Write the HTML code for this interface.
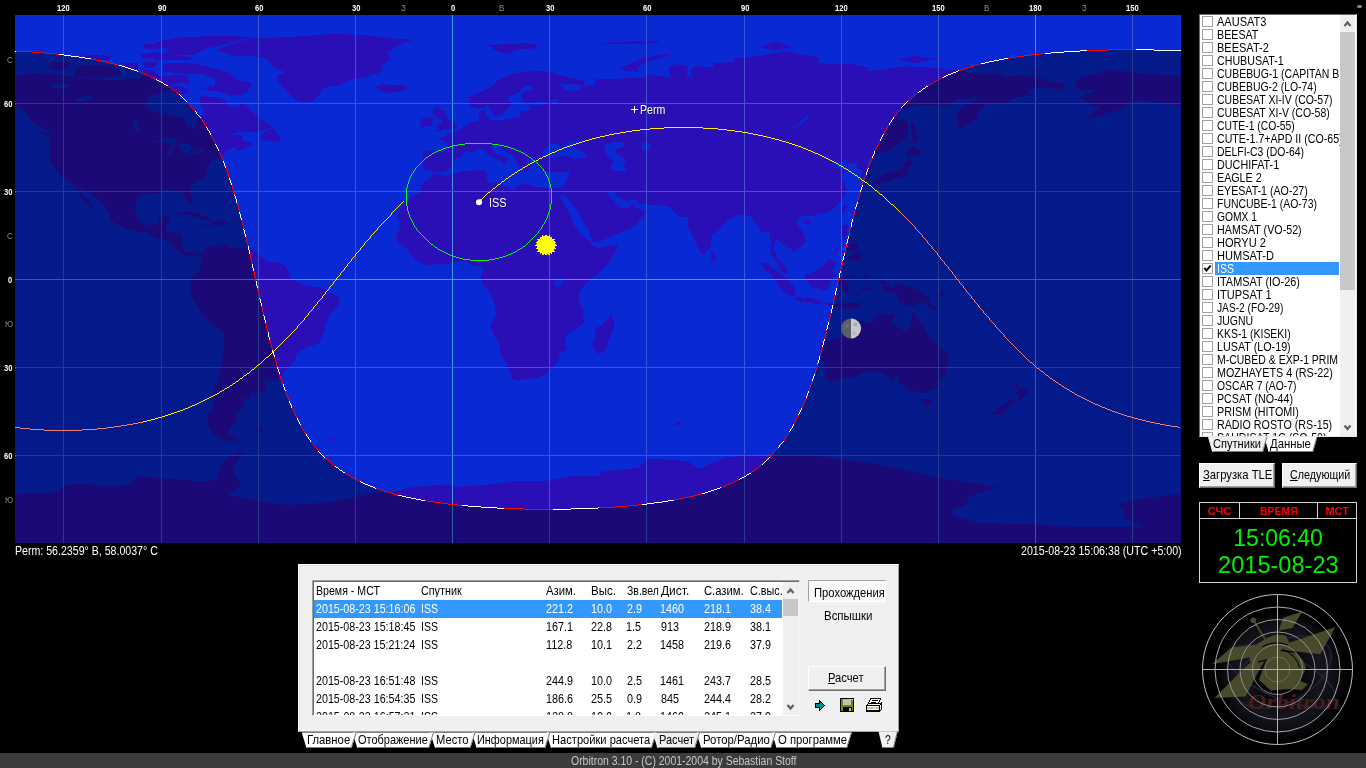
<!DOCTYPE html>
<html lang="ru"><head><meta charset="utf-8"><title>Orbitron</title>
<style>
html,body{margin:0;padding:0;background:#000;}
body{width:1366px;height:768px;overflow:hidden;position:relative;font-family:"Liberation Sans",sans-serif;font-size:13px;line-height:13px;color:#000;}
div,span,i{box-sizing:border-box}
.abs{position:absolute}
.t{position:absolute;white-space:nowrap;font-size:13px;line-height:13px;display:block;backface-visibility:hidden;transform-origin:0 0}
.cl{position:absolute;height:13px;overflow:hidden;display:block}
u{text-decoration:underline;text-decoration-thickness:1px;text-underline-offset:1px}
.selbg{position:absolute;background:#3399ff}
.foc{outline:1px dotted #b87838;outline-offset:-1px}
#list{position:absolute;left:1199px;top:14px;width:158px;height:423px;background:#fff;border:1px solid;border-color:#696969 #e3e3e3 #e3e3e3 #696969;overflow:hidden}
#list .rows{position:absolute;left:0;top:0;width:140px;height:421px;overflow:hidden}
.cb{position:absolute;left:2px;width:11px;height:11px;border:1px solid #a2a2a2;background:#fff;display:block}
.sb{position:absolute;background:#f0f0f0}
.thumb{position:absolute;background:#c8c8c8}
.btn{position:absolute;background:#f0f0f0;border:1px solid;border-color:#fff #6e6e6e #6e6e6e #fff;box-shadow:inset -1px -1px 0 #a0a0a0}
#panel{position:absolute;left:298px;top:564px;width:601px;height:168px;background:#f0f0f0;border:1px solid;border-color:#fff #a0a0a0 #a0a0a0 #fff;box-shadow:inset 1px 1px 0 #e3e3e3}
#lv{position:absolute;left:312px;top:580px;width:488px;height:136px;background:#fff;border:1px solid;border-color:#a0a0a0 #f4f4f4 #fff #a0a0a0}
#lv .in{position:absolute;left:0;top:0;width:486px;height:134px;border-left:1px solid #696969;border-top:1px solid #696969;overflow:hidden}
#lv .rows{position:absolute;left:0;top:0;width:469px;height:133px;overflow:hidden}
#status{position:absolute;left:0;top:753px;width:1366px;height:15px;background:#3c3c3c}
#clock{position:absolute;left:1199px;top:502px;width:158px;height:81px;border:1px solid #d4d4d4;background:#000}
#clock .h{position:absolute;top:0;height:16px;border-bottom:1px solid #d4d4d4}
</style></head><body>
<svg id="map" width="1366" height="562" viewBox="0 0 1366 562" style="position:absolute;left:0;top:0" shape-rendering="crispEdges">
<defs><clipPath id="mc"><rect x="15" y="15" width="1166" height="528"/></clipPath></defs>
<g clip-path="url(#mc)">
<rect x="15" y="15" width="1166" height="528" fill="#0829d3"/>
<path d="M-92.1,86.6L-87.3,78.7L-75.9,75.1L-54.9,69.9L-33.8,72.2L-4.7,74.5L14.8,75.7L37.4,72.8L56.9,74.3L79.5,77.5L102.2,79.5L124.9,79.5L141.1,78.7L144.3,69.3L154.0,70.7L160.5,76.6L176.7,75.1L186.4,74.8L189.6,82.5L173.5,83.9L170.2,89.8L150.8,95.7L145.9,105.9L152.4,111.8L167.0,113.3L176.7,116.8L186.4,117.7L186.4,125.0L192.9,128.8L196.1,126.5L196.1,119.1L202.6,114.7L204.2,108.9L199.4,103.0L201.0,96.0L215.6,97.1L225.3,100.1L226.9,105.9L238.2,107.4L241.5,102.1L251.2,110.3L257.7,117.7L270.6,125.0L270.6,127.9L257.7,131.7L238.2,131.7L230.1,135.3L243.1,135.3L241.5,139.7L254.4,144.1L244.7,148.5L238.2,151.4L235.0,147.0L225.3,151.4L223.7,155.8L212.3,160.2L207.5,167.5L205.8,176.3L199.4,179.3L189.6,186.6L192.9,199.8L191.3,205.1L186.4,201.3L183.8,193.9L179.9,191.0L167.0,190.1L160.5,193.3L147.5,192.5L137.8,196.9L136.2,205.7L135.2,214.5L141.1,223.3L147.5,225.3L157.3,223.9L158.9,217.4L170.2,215.9L167.0,224.7L165.4,232.1L179.9,232.7L182.2,235.6L181.6,246.7L186.4,252.6L194.5,251.1L201.0,253.5L201.0,257.6L196.1,253.5L192.9,257.6L183.2,254.7L175.1,249.7L168.6,240.9L155.6,237.9L147.5,232.1L137.8,232.7L124.9,228.3L110.3,220.3L110.3,213.0L102.2,204.2L89.2,192.5L80.2,186.6L81.1,191.0L89.2,199.8L94.1,207.7L97.3,211.5L89.2,207.1L81.1,197.5L76.9,191.0L72.4,183.7L61.7,177.8L56.9,170.5L50.4,160.8L49.4,152.9L50.4,142.6L48.1,137.0L53.6,135.3L47.1,130.9L39.0,126.5L29.3,119.1L24.5,111.8L14.8,105.9L-1.4,103.0L-17.6,101.5L-30.6,100.1L-40.3,105.9L-46.8,110.3L-59.7,113.3L-72.7,117.7L-80.8,119.1L-66.2,107.4L-72.7,105.9L-82.4,100.1L-85.7,97.1L-80.8,94.2L-69.5,89.8L-85.7,89.8ZM1073.9,86.6L1078.7,78.7L1090.1,75.1L1111.1,69.9L1132.2,72.2L1161.3,74.5L1180.8,75.7L1203.4,72.8L1222.9,74.3L1245.5,77.5L1268.2,79.5L1290.9,79.5L1307.1,78.7L1310.3,69.3L1320.0,70.7L1326.5,76.6L1342.7,75.1L1352.4,74.8L1355.7,82.5L1339.5,83.9L1336.2,89.8L1316.8,95.7L1311.9,105.9L1318.4,111.8L1333.0,113.3L1342.7,116.8L1352.4,117.7L1352.4,125.0L1358.9,128.8L1362.1,126.5L1362.1,119.1L1368.6,114.7L1370.2,108.9L1365.4,103.0L1367.0,96.0L1381.6,97.1L1391.3,100.1L1392.9,105.9L1404.2,107.4L1407.5,102.1L1417.2,110.3L1423.7,117.7L1436.6,125.0L1436.6,127.9L1423.7,131.7L1404.2,131.7L1396.1,135.3L1409.1,135.3L1407.5,139.7L1420.4,144.1L1410.7,148.5L1404.2,151.4L1401.0,147.0L1391.3,151.4L1389.7,155.8L1378.3,160.2L1373.5,167.5L1371.8,176.3L1365.4,179.3L1355.7,186.6L1358.9,199.8L1357.3,205.1L1352.4,201.3L1349.8,193.9L1345.9,191.0L1333.0,190.1L1326.5,193.3L1313.5,192.5L1303.8,196.9L1302.2,205.7L1301.2,214.5L1307.1,223.3L1313.5,225.3L1323.3,223.9L1324.9,217.4L1336.2,215.9L1333.0,224.7L1331.4,232.1L1345.9,232.7L1348.2,235.6L1347.6,246.7L1352.4,252.6L1360.5,251.1L1367.0,253.5L1367.0,257.6L1362.1,253.5L1358.9,257.6L1349.2,254.7L1341.1,249.7L1334.6,240.9L1321.6,237.9L1313.5,232.1L1303.8,232.7L1290.9,228.3L1276.3,220.3L1276.3,213.0L1268.2,204.2L1255.2,192.5L1246.2,186.6L1247.1,191.0L1255.2,199.8L1260.1,207.7L1263.3,211.5L1255.2,207.1L1247.1,197.5L1242.9,191.0L1238.4,183.7L1227.7,177.8L1222.9,170.5L1216.4,160.8L1215.4,152.9L1216.4,142.6L1214.1,137.0L1219.6,135.3L1213.1,130.9L1205.0,126.5L1195.3,119.1L1190.5,111.8L1180.8,105.9L1164.6,103.0L1148.4,101.5L1135.4,100.1L1125.7,105.9L1119.2,110.3L1106.3,113.3L1093.3,117.7L1085.2,119.1L1099.8,107.4L1093.3,105.9L1083.6,100.1L1080.3,97.1L1085.2,94.2L1096.5,89.8L1080.3,89.8ZM201.0,254.1L207.5,247.3L218.8,243.8L220.4,247.3L225.3,243.2L231.8,248.2L244.7,248.2L251.2,247.6L257.7,254.1L267.4,261.4L277.1,262.0L285.2,265.8L290.1,273.7L290.1,279.0L296.5,281.9L307.9,286.3L322.4,287.2L332.2,293.7L338.6,296.6L338.6,305.4L330.5,314.2L325.7,323.0L324.1,331.8L319.2,343.5L307.9,347.1L296.5,353.8L294.3,362.6L286.8,369.9L278.7,378.7L269.0,381.1L262.5,378.7L267.4,386.1L264.1,391.9L251.2,393.4L249.6,399.3L241.5,399.3L244.7,404.5L239.9,411.0L233.4,415.4L238.2,419.8L230.1,427.1L228.5,432.4L230.1,434.5L239.9,439.7L231.8,441.8L222.0,438.9L212.3,433.0L207.5,425.7L207.5,416.9L212.3,409.5L213.0,399.3L213.9,389.0L218.8,378.7L220.4,367.0L223.7,352.3L224.3,337.7L223.7,332.7L215.6,327.4L204.9,320.1L199.4,309.8L192.9,299.5L188.7,293.7L191.9,288.7L189.6,283.4L192.9,277.5L196.1,273.7L200.0,268.7L201.0,259.9ZM215.6,49.6L231.8,44.3L251.2,38.5L290.1,37.0L328.9,34.1L361.3,34.7L393.7,38.5L413.1,39.9L396.9,45.8L387.2,53.1L390.5,59.0L380.7,66.3L380.7,72.2L367.8,76.6L351.6,79.5L338.6,85.4L325.7,86.9L319.2,94.2L312.7,102.4L304.6,102.4L294.9,99.5L286.8,91.3L278.7,82.5L277.1,75.1L285.2,72.2L273.9,67.8L267.4,59.0L254.4,56.1L235.0,56.1L222.0,52.5ZM432.6,174.0L445.5,175.7L461.7,171.1L484.4,169.9L487.6,176.3L485.4,179.3L490.9,182.8L502.2,184.5L513.5,190.1L516.8,185.1L526.5,183.7L533.0,186.0L545.9,188.1L555.6,187.5L557.3,191.0L560.5,196.9L567.0,208.6L571.8,217.4L573.5,224.7L579.9,233.5L591.3,242.3L592.2,245.3L597.8,248.2L607.5,246.1L617.8,244.4L616.5,249.7L610.7,259.9L605.8,267.3L594.5,276.1L588.0,281.9L581.6,287.8L578.3,295.1L579.9,302.5L583.2,309.8L583.8,323.0L575.1,329.7L567.0,334.7L565.4,340.6L567.0,349.4L558.9,354.7L558.2,362.6L552.4,367.0L544.3,375.2L536.2,378.1L523.3,379.3L516.8,381.1L511.9,378.7L510.3,372.9L505.4,362.6L500.6,355.3L499.0,343.5L492.5,331.8L490.2,325.3L495.7,314.2L495.1,305.4L491.8,296.6L490.2,292.2L482.8,284.9L481.1,277.5L483.4,268.7L480.5,265.8L474.7,266.1L471.4,266.4L466.6,260.5L458.5,260.5L448.8,263.5L445.5,264.9L439.0,263.7L427.7,266.1L422.9,264.3L414.8,259.1L409.2,254.1L408.3,250.3L403.4,246.7L397.9,242.9L395.3,235.9L398.6,232.1L400.2,223.3L396.9,217.4L400.2,210.1L405.0,202.7L409.9,197.7L419.6,192.5L420.6,186.6L424.5,181.3L430.9,177.8ZM422.9,165.5L422.9,152.9L426.1,150.8L445.5,151.7L447.8,144.1L443.9,140.3L436.8,137.3L447.1,136.1L446.2,133.2L452.6,133.8L457.2,130.0L465.0,126.5L468.2,122.7L479.5,120.6L478.9,111.8L486.0,109.7L486.0,116.2L490.9,120.0L497.3,120.6L511.9,118.5L520.0,116.2L520.0,111.8L529.7,110.3L530.7,105.1L542.7,104.5L549.2,103.0L542.7,101.5L526.5,103.0L521.6,100.1L521.0,94.2L533.0,88.3L529.7,86.0L523.3,86.9L520.0,91.3L508.7,97.1L508.0,101.5L512.9,103.0L505.4,110.3L503.8,114.1L498.3,116.2L494.1,116.5L492.5,113.3L487.6,105.9L477.9,108.9L469.8,105.9L468.2,97.1L479.5,92.7L490.9,86.9L499.0,79.5L513.5,73.7L534.6,70.7L542.7,70.7L552.4,72.8L558.9,75.1L584.8,81.0L584.8,84.8L575.1,84.8L558.9,83.3L564.7,89.8L573.5,91.3L581.6,88.9L580.9,86.0L594.5,84.8L594.5,78.7L601.0,78.9L610.7,79.5L626.9,78.1L643.1,78.1L648.0,74.3L660.9,75.7L673.9,78.7L669.0,73.7L669.0,66.3L678.7,64.0L687.8,66.3L686.8,75.1L691.7,78.9L690.1,69.3L694.9,66.3L712.7,66.9L714.4,63.1L733.8,61.9L733.8,58.4L759.7,55.8L788.8,51.1L798.6,53.7L818.0,56.7L819.6,62.8L808.3,62.5L834.2,64.0L852.0,64.0L869.8,67.8L866.6,71.3L882.8,69.3L905.4,66.3L937.8,67.8L960.5,70.7L971.8,74.5L1002.6,73.7L1005.9,76.6L1025.3,74.5L1035.0,76.6L1051.2,81.0L1067.4,84.8L1059.3,89.8L1041.5,86.9L1035.0,88.3L1026.9,89.2L1031.8,95.7L1015.6,97.7L1004.2,103.0L986.4,103.0L981.6,108.9L976.7,114.7L976.7,119.1L970.2,123.5L960.5,129.4L957.3,123.5L956.3,113.3L960.5,108.9L970.2,101.5L983.2,95.7L970.2,98.6L957.3,98.6L950.8,104.5L937.8,104.5L915.2,105.1L899.0,111.8L890.9,118.5L907.1,120.6L908.7,126.5L907.1,136.7L900.6,142.6L890.9,149.9L879.5,152.9L874.7,154.3L866.6,161.7L870.8,170.5L869.8,175.7L861.7,177.8L861.7,170.5L856.9,167.5L856.9,162.5L845.5,164.6L847.1,159.3L834.2,164.6L837.4,169.0L848.8,169.6L840.7,174.9L845.5,185.1L847.1,191.0L843.9,196.9L837.4,205.1L829.3,211.5L819.6,213.9L809.9,216.5L801.8,215.9L795.3,221.8L803.4,232.1L806.0,242.3L798.6,248.2L792.1,253.5L792.1,249.1L785.6,246.7L779.1,240.9L775.9,239.4L773.6,248.2L777.5,258.5L786.6,267.3L787.2,274.6L780.7,271.1L776.9,261.4L770.4,254.1L771.0,242.3L768.4,231.2L761.3,232.1L757.4,224.7L750.0,215.9L741.9,214.5L733.8,216.8L727.3,221.2L717.6,230.6L711.8,235.0L711.1,243.8L709.5,249.1L703.0,255.5L698.2,248.2L693.3,237.9L688.4,227.7L687.8,217.4L680.3,217.4L675.5,213.6L670.0,207.1L659.3,204.8L646.3,204.8L637.3,203.3L635.0,199.8L626.9,200.7L617.2,196.9L613.9,191.0L607.5,191.0L609.1,195.4L614.6,201.3L617.2,205.7L618.8,202.7L620.4,208.0L628.5,208.0L634.3,202.1L635.0,207.1L642.4,210.1L645.7,213.6L639.9,219.5L637.6,223.9L630.1,228.5L620.4,232.7L609.1,237.9L597.8,241.5L592.2,241.5L590.3,235.0L588.0,229.1L581.6,220.3L577.7,211.5L571.2,202.7L565.4,196.9L564.7,192.5L562.8,197.5L557.9,191.6L557.3,187.5L563.1,187.2L565.4,182.2L568.6,174.9L568.6,171.1L558.9,172.8L550.8,171.9L541.1,170.5L537.2,165.2L537.8,161.7L529.7,159.3L526.5,160.8L525.5,163.7L529.7,167.5L526.5,171.9L523.3,171.3L521.0,168.1L516.8,162.5L515.2,157.3L511.9,154.3L502.2,149.9L497.3,146.4L495.7,144.9L491.8,146.1L492.5,149.9L497.3,154.3L503.8,156.4L511.9,161.1L507.1,160.2L505.4,164.6L502.9,167.5L503.8,163.1L500.6,161.1L492.5,157.3L486.0,153.5L484.4,149.9L480.5,148.8L476.3,150.5L471.4,152.6L465.0,151.4L461.7,154.3L462.4,156.4L453.6,160.2L451.0,163.7L450.4,167.5L445.5,171.1L434.8,172.8L431.6,171.1L427.7,169.9L422.9,170.5ZM434.2,132.3L442.3,130.3L456.2,128.8L457.5,124.4L452.0,122.1L447.1,117.7L445.5,114.7L445.5,109.7L439.0,109.7L442.3,107.1L435.8,107.1L432.6,110.3L434.2,116.2L436.5,118.3L442.3,120.6L442.3,122.7L437.4,122.7L438.4,125.6L435.2,127.1L440.7,128.2L437.4,129.4ZM419.6,127.1L431.6,125.9L432.6,122.1L434.2,119.1L430.9,117.1L425.4,117.1L419.6,120.0L421.2,122.9ZM374.3,86.9L380.7,84.2L393.7,84.8L403.4,84.8L407.6,88.3L403.4,90.4L390.5,93.0L379.1,91.6L380.7,88.9ZM487.6,45.2L503.8,44.3L523.3,43.2L539.5,44.0L533.0,48.7L520.0,49.3L507.1,54.3L497.3,51.7ZM618.8,68.4L630.1,64.0L639.9,59.0L662.5,54.6L673.9,53.4L665.8,56.9L646.3,61.9L636.6,67.8L638.2,71.6L626.9,71.3ZM759.7,47.3L775.9,41.4L792.1,47.3L775.9,50.2ZM895.7,59.0L915.2,56.1L937.8,58.4L915.2,63.4ZM1030.1,69.9L1043.1,69.9L1041.5,71.3L1031.8,71.3ZM876.3,179.3L882.8,174.9L894.1,171.3L900.6,169.0L905.4,161.7L909.7,157.9L911.9,163.1L908.7,169.0L907.1,175.5L901.2,177.2L895.1,177.8L890.9,180.7L882.8,182.2L877.9,187.2L874.0,187.5L872.1,181.3ZM905.4,157.3L906.4,152.3L911.0,145.8L916.8,149.3L922.6,151.4L916.8,155.8L908.7,154.9ZM911.9,119.7L916.1,126.5L916.1,133.8L920.0,135.3L915.2,143.5L911.9,142.6L911.9,132.3L911.0,126.5ZM843.9,205.1L847.1,205.7L843.3,214.5L840.7,211.5ZM805.0,220.3L811.5,220.3L809.9,224.7L804.1,224.1ZM842.3,224.7L847.8,224.7L847.1,232.1L845.5,237.9L853.6,240.9L852.0,242.3L842.9,238.5L840.7,232.1ZM847.1,244.4L858.5,242.9L857.8,249.7L851.4,251.7L847.1,249.7ZM847.1,258.5L852.0,254.1L858.5,250.5L861.7,255.5L860.1,260.5L857.8,262.3L853.6,259.9ZM831.9,254.1L839.0,246.7L839.7,248.2L833.2,254.7ZM805.0,274.6L811.5,273.7L818.0,269.3L824.5,264.3L830.0,258.5L837.4,263.7L834.2,266.4L833.2,271.7L837.4,276.1L832.6,277.5L829.3,283.4L827.7,290.1L822.9,290.7L818.0,288.4L813.1,288.7L808.3,283.4L805.0,279.0ZM760.7,262.6L767.8,263.7L775.9,270.2L787.2,279.0L795.3,287.8L794.7,296.0L790.5,296.0L782.4,290.7L777.5,283.4L771.0,274.6L762.9,267.3ZM792.7,298.9L797.6,296.6L803.7,298.7L811.5,298.1L818.0,299.5L822.9,301.6L822.2,304.5L811.5,303.3L801.8,301.9L796.6,300.7ZM824.5,303.1L837.4,303.3L850.4,303.3L863.3,303.3L860.1,306.3L853.6,308.9L840.7,307.7L827.7,305.4ZM839.0,295.1L841.6,287.8L837.4,281.9L840.7,276.7L850.4,276.1L856.9,274.6L855.2,277.8L843.9,277.8L845.5,281.9L851.4,281.6L847.1,284.9L849.7,292.2L846.2,292.8L843.3,287.8L842.0,295.1ZM865.0,273.1L868.8,276.1L866.6,281.3L864.3,277.5ZM860.1,288.4L874.7,287.8L873.1,290.1L863.3,290.1ZM876.3,281.3L886.0,281.3L890.9,288.7L899.0,284.0L908.7,286.6L920.0,290.1L924.9,295.1L930.7,298.1L928.1,301.0L933.0,305.4L940.4,309.8L929.7,308.3L924.9,303.1L918.4,301.6L915.2,306.0L908.7,306.0L902.2,302.5L899.0,303.3L898.0,295.1L890.9,292.2L882.8,290.7L879.5,287.2L885.4,285.7ZM933.0,295.1L944.3,291.3L945.3,295.1L936.2,297.5ZM711.1,250.5L716.9,257.0L714.4,261.4L711.1,260.8L710.5,255.5ZM611.7,314.2L614.9,324.5L612.3,330.3L606.8,346.5L604.2,352.3L597.8,353.8L593.5,347.9L592.9,342.1L596.1,336.2L594.5,328.9L602.6,324.5L607.5,318.6ZM819.6,343.5L821.9,355.3L824.5,367.0L826.1,377.3L824.5,379.6L834.2,381.7L840.7,378.7L853.6,377.3L860.1,373.7L869.8,372.0L877.9,371.4L886.0,375.2L890.9,381.1L897.3,375.8L899.0,383.1L904.5,386.1L908.7,391.1L918.4,391.9L925.8,393.4L931.4,389.9L937.8,388.1L941.1,378.7L946.6,372.9L948.2,364.1L947.5,355.3L941.1,347.9L934.6,340.6L928.1,335.6L924.9,331.8L922.6,323.0L917.4,320.9L914.2,311.3L911.0,317.1L910.3,324.5L907.7,330.3L902.2,329.7L895.7,325.3L890.9,323.0L892.5,318.6L894.8,314.2L882.8,313.3L876.3,315.1L872.1,322.4L866.6,323.0L861.7,320.1L855.2,325.9L848.1,330.3L847.1,333.3L839.0,337.7L829.3,340.0L822.9,342.7ZM920.7,398.7L932.0,398.7L931.4,405.1L926.5,406.6L923.3,403.7ZM1011.4,380.2L1017.2,384.6L1022.0,389.0L1030.1,389.6L1025.3,394.9L1020.4,400.7L1018.2,399.3L1018.8,395.7L1015.6,394.0L1017.8,389.0L1012.3,381.7ZM1011.4,397.8L1016.2,400.7L1012.3,405.1L1005.9,409.5L1004.2,413.9L997.8,415.4L991.3,413.3L997.8,408.1L1005.9,403.1ZM176.7,214.5L186.4,210.9L196.1,213.0L207.5,217.4L211.7,219.7L201.0,220.6L199.4,218.3L186.4,213.9L179.9,215.1ZM210.7,220.9L218.8,220.3L230.1,223.9L222.0,226.2L211.4,225.3ZM198.4,225.0L204.9,225.3L204.2,226.8L198.7,226.8ZM234.3,224.7L239.2,225.0L238.9,226.2L234.3,226.2ZM259.9,139.1L265.8,130.3L272.2,127.9L280.3,136.7L281.3,141.1L272.2,141.7ZM36.5,130.0L47.1,131.7L52.0,136.7L45.5,135.9ZM252.8,83.9L244.7,94.2L231.8,95.7L218.8,91.3L199.4,89.8L213.9,85.4L215.6,78.7L199.4,73.7L176.7,73.7L162.1,70.7L163.7,63.4L189.6,62.8L202.6,65.5L218.8,69.3L231.8,73.7L236.6,79.5L251.2,82.5ZM73.1,73.7L79.5,64.9L102.2,64.9L111.9,66.3L123.3,73.7L111.9,76.6L95.7,77.8L76.3,76.6ZM47.1,67.8L53.6,61.1L71.4,62.5L66.6,69.3L52.0,70.1ZM160.5,54.6L170.2,50.2L154.0,42.9L176.7,37.6L225.3,35.5L251.2,37.6L231.8,42.9L205.8,48.7L192.9,55.2ZM141.1,53.7L157.3,53.1L192.9,57.5L186.4,60.5L157.3,59.9L141.1,57.5ZM76.3,56.1L95.7,54.6L111.9,56.1L108.7,59.6L89.2,60.5L76.3,59.0ZM121.6,63.4L137.8,62.5L137.8,69.3L128.1,68.4ZM142.7,61.9L158.9,61.9L154.0,67.8L144.3,67.8ZM141.1,44.3L167.0,43.5L170.2,47.3L147.5,49.3ZM170.2,86.9L179.9,86.0L191.3,91.9L183.2,94.2L173.5,92.7ZM-1151.2,493.7L-1107.5,492.3L-1100.1,484.9L-1078.1,483.5L-1066.4,486.4L-1037.2,484.9L-1028.2,476.1L-1001.9,478.5L-961.1,481.4L-949.1,479.1L-943.3,461.5L-931.7,454.1L-918.7,449.7L-927.8,457.9L-933.3,470.3L-924.5,484.9L-937.5,495.2L-908.3,501.1L-879.2,504.9L-843.9,503.1L-814.4,498.1L-794.0,493.1L-775.9,492.3L-758.4,487.9L-746.7,486.4L-717.2,484.3L-713.0,487.0L-679.3,484.9L-653.1,481.4L-617.8,480.5L-588.7,475.5L-568.2,476.1L-562.1,471.1L-527.1,467.9L-518.4,458.5L-506.7,459.1L-477.2,461.5L-467.2,468.8L-453.9,462.9L-439.3,457.1L-401.1,455.0L-375.9,455.6L-346.7,456.2L-323.4,460.0L-293.9,462.9L-258.9,470.3L-229.5,477.6L-200.3,482.0L-167.9,487.3L-197.4,496.7L-200.3,505.5L-213.6,509.0L-212.9,515.7L-188.7,522.5L-130.0,524.5L-83.1,527.5L-24.8,526.6L-42.3,517.2L-41.9,511.3L-48.1,504.0L-30.6,499.6L14.8,493.7L16.4,545.9L-1152.9,545.9L-1152.9,493.7ZM14.8,493.7L58.5,492.3L65.9,484.9L87.9,483.5L99.6,486.4L128.8,484.9L137.8,476.1L164.1,478.5L204.9,481.4L216.9,479.1L222.7,461.5L234.3,454.1L247.3,449.7L238.2,457.9L232.7,470.3L241.5,484.9L228.5,495.2L257.7,501.1L286.8,504.9L322.1,503.1L351.6,498.1L372.0,493.1L390.1,492.3L407.6,487.9L419.3,486.4L448.8,484.3L453.0,487.0L486.7,484.9L512.9,481.4L548.2,480.5L577.3,475.5L597.8,476.1L603.9,471.1L638.9,467.9L647.6,458.5L659.3,459.1L688.8,461.5L698.8,468.8L712.1,462.9L726.7,457.1L764.9,455.0L790.1,455.6L819.3,456.2L842.6,460.0L872.1,462.9L907.1,470.3L936.5,477.6L965.7,482.0L998.1,487.3L968.6,496.7L965.7,505.5L952.4,509.0L953.1,515.7L977.3,522.5L1036.0,524.5L1082.9,527.5L1141.2,526.6L1123.7,517.2L1124.1,511.3L1117.9,504.0L1135.4,499.6L1180.8,493.7L1182.4,545.9L13.1,545.9L13.1,493.7ZM1180.8,493.7L1224.5,492.3L1231.9,484.9L1253.9,483.5L1265.6,486.4L1294.8,484.9L1303.8,476.1L1330.1,478.5L1370.9,481.4L1382.9,479.1L1388.7,461.5L1400.3,454.1L1413.3,449.7L1404.2,457.9L1398.7,470.3L1407.5,484.9L1394.5,495.2L1423.7,501.1L1452.8,504.9L1488.1,503.1L1517.6,498.1L1538.0,493.1L1556.1,492.3L1573.6,487.9L1585.3,486.4L1614.8,484.3L1619.0,487.0L1652.7,484.9L1678.9,481.4L1714.2,480.5L1743.3,475.5L1763.8,476.1L1769.9,471.1L1804.9,467.9L1813.6,458.5L1825.3,459.1L1854.8,461.5L1864.8,468.8L1878.1,462.9L1892.7,457.1L1930.9,455.0L1956.1,455.6L1985.3,456.2L2008.6,460.0L2038.1,462.9L2073.1,470.3L2102.5,477.6L2131.7,482.0L2164.1,487.3L2134.6,496.7L2131.7,505.5L2118.4,509.0L2119.1,515.7L2143.3,522.5L2202.0,524.5L2248.9,527.5L2307.2,526.6L2289.7,517.2L2290.1,511.3L2283.9,504.0L2301.4,499.6L2346.8,493.7L2348.4,545.9L1179.1,545.9L1179.1,493.7ZM254.4,429.2L264.1,429.5L262.5,432.1L255.1,431.8ZM328.9,437.4L335.4,438.3L334.4,439.7L329.6,438.9ZM674.8,421.9L680.3,422.1L679.7,424.5L675.5,424.5ZM601.0,43.5L613.9,41.7L633.4,41.4L652.8,40.5L662.5,42.0L646.3,43.7L626.9,44.3Z" fill="#2a0eb6"/>
<path d="M542.7,156.4L542.7,151.4L547.5,147.0L550.8,143.2L558.9,144.1L560.5,148.2L567.0,147.0L565.4,143.2L576.7,140.5L579.0,142.6L571.8,146.1L575.1,148.5L586.4,154.3L586.4,157.3L575.1,158.7L565.4,155.8L555.6,157.3L547.5,158.1ZM604.2,145.5L613.9,142.0L623.7,142.6L623.7,147.0L617.2,148.5L615.6,152.9L623.0,157.3L626.3,160.2L623.7,166.1L626.9,170.5L617.2,171.3L610.7,169.0L611.7,163.1L613.9,160.8L607.5,155.8L605.2,151.4ZM641.5,142.6L649.6,142.6L649.6,149.9L641.5,150.5ZM154.0,141.7L167.0,136.7L176.7,139.7L178.3,142.6L170.2,142.6L160.5,142.0ZM167.0,155.8L170.2,145.5L176.7,144.7L171.8,151.4L170.2,156.7ZM178.3,144.1L189.6,144.1L192.9,148.5L186.4,152.9L181.6,149.9ZM182.2,156.7L196.1,153.5L204.2,152.0L204.2,149.9L194.5,150.8L184.8,154.9ZM131.4,122.1L136.2,120.6L139.4,129.4L136.2,130.9ZM50.4,85.4L63.3,82.5L69.8,85.4L63.3,88.3L53.6,88.3ZM73.1,100.1L86.0,95.7L95.7,95.7L89.2,100.1L79.5,101.5ZM788.8,127.9L795.3,125.6L806.7,116.2L808.3,116.8L801.8,124.1L792.1,127.9ZM555.0,280.5L560.5,278.1L563.7,281.9L558.9,287.2L555.0,285.7ZM549.2,101.5L555.6,98.6L558.9,100.1L557.3,103.0L552.4,103.0Z" fill="#0829d3"/>
<rect x="-34" y="15" width="1" height="528" fill="#3e55d3"/>
<rect x="63" y="15" width="1" height="528" fill="#3e55d3"/>
<rect x="161" y="15" width="1" height="528" fill="#3e55d3"/>
<rect x="258" y="15" width="1" height="528" fill="#3e55d3"/>
<rect x="355" y="15" width="1" height="528" fill="#3e55d3"/>
<rect x="452" y="15" width="1" height="528" fill="#4696ea"/>
<rect x="549" y="15" width="1" height="528" fill="#3e55d3"/>
<rect x="646" y="15" width="1" height="528" fill="#3e55d3"/>
<rect x="744" y="15" width="1" height="528" fill="#3e55d3"/>
<rect x="841" y="15" width="1" height="528" fill="#3e55d3"/>
<rect x="938" y="15" width="1" height="528" fill="#3e55d3"/>
<rect x="1035" y="15" width="1" height="528" fill="#4696ea"/>
<rect x="1132" y="15" width="1" height="528" fill="#3e55d3"/>
<rect x="15" y="455" width="1166" height="1" fill="#3e55d3"/>
<rect x="15" y="367" width="1166" height="1" fill="#3e55d3"/>
<rect x="15" y="279" width="1166" height="1" fill="#4696ea"/>
<rect x="15" y="191" width="1166" height="1" fill="#3e55d3"/>
<rect x="15" y="103" width="1166" height="1" fill="#3e55d3"/>
<path d="M-1.4,50.3L1.8,50.4L5.0,50.5L8.3,50.7L11.5,50.8L14.8,51.0L18.0,51.2L21.2,51.3L24.5,51.5L27.7,51.7L30.9,52.0L34.2,52.2L37.4,52.4L40.7,52.7L43.9,53.0L47.1,53.3L50.4,53.6L53.6,53.9L56.9,54.3L60.1,54.6L63.3,55.0L66.6,55.4L69.8,55.8L73.1,56.3L76.3,56.7L79.5,57.2L82.8,57.7L86.0,58.2L89.2,58.8L92.5,59.4L95.7,60.0L99.0,60.6L102.2,61.3L105.4,62.0L108.7,62.7L111.9,63.5L115.2,64.4L118.4,65.2L121.6,66.1L124.9,67.1L128.1,68.1L131.4,69.2L134.6,70.3L137.8,71.5L141.1,72.7L144.3,74.0L147.5,75.4L150.8,76.9L154.0,78.5L157.3,80.2L160.5,82.0L163.7,83.9L167.0,85.9L170.2,88.0L173.5,90.3L176.7,92.8L179.9,95.5L183.2,98.3L186.4,101.4L189.6,104.7L192.9,108.2L196.1,112.1L199.4,116.3L202.6,120.8L205.8,125.7L209.1,131.1L212.3,136.9L215.6,143.3L218.8,150.2L222.0,157.8L225.3,166.1L228.5,175.1L231.8,184.9L235.0,195.4L238.2,206.8L241.5,219.0L244.7,231.9L247.9,245.5L251.2,259.5L254.4,273.7L257.7,288.1L260.9,302.4L264.1,316.3L267.4,329.7L270.6,342.5L273.9,354.5L277.1,365.7L280.3,376.2L283.6,385.8L286.8,394.7L290.1,402.8L293.3,410.2L296.5,417.1L299.8,423.3L303.0,429.0L306.2,434.3L309.5,439.1L312.7,443.6L316.0,447.7L319.2,451.5L322.4,455.0L325.7,458.3L328.9,461.3L332.2,464.1L335.4,466.7L338.6,469.1L341.9,471.4L345.1,473.5L348.4,475.5L351.6,477.4L354.8,479.2L358.1,480.8L361.3,482.4L364.6,483.8L367.8,485.2L371.0,486.5L374.3,487.8L377.5,489.0L380.7,490.1L384.0,491.1L387.2,492.1L390.5,493.1L393.7,494.0L396.9,494.8L400.2,495.6L403.4,496.4L406.7,497.1L409.9,497.8L413.1,498.5L416.4,499.1L419.6,499.8L422.9,500.3L426.1,500.9L429.3,501.4L432.6,501.9L435.8,502.4L439.0,502.8L442.3,503.3L445.5,503.7L448.8,504.1L452.0,504.5L455.2,504.8L458.5,505.1L461.7,505.5L465.0,505.8L468.2,506.1L471.4,506.3L474.7,506.6L477.9,506.8L481.1,507.1L484.4,507.3L487.6,507.5L490.9,507.7L494.1,507.9L497.3,508.0L500.6,508.2L503.8,508.4L507.1,508.5L510.3,508.6L513.5,508.7L516.8,508.8L520.0,508.9L523.3,509.0L526.5,509.1L529.7,509.1L533.0,509.2L536.2,509.2L539.5,509.2L542.7,509.3L545.9,509.3L549.2,509.3L552.4,509.3L555.6,509.2L558.9,509.2L562.1,509.2L565.4,509.1L568.6,509.0L571.8,509.0L575.1,508.9L578.3,508.8L581.6,508.7L584.8,508.6L588.0,508.5L591.3,508.3L594.5,508.2L597.8,508.0L601.0,507.8L604.2,507.7L607.5,507.5L610.7,507.3L613.9,507.0L617.2,506.8L620.4,506.6L623.7,506.3L626.9,506.0L630.1,505.7L633.4,505.4L636.6,505.1L639.9,504.7L643.1,504.4L646.3,504.0L649.6,503.6L652.8,503.2L656.0,502.7L659.3,502.3L662.5,501.8L665.8,501.3L669.0,500.8L672.2,500.2L675.5,499.6L678.7,499.0L682.0,498.4L685.2,497.7L688.4,497.0L691.7,496.3L694.9,495.5L698.2,494.6L701.4,493.8L704.6,492.9L707.9,491.9L711.1,490.9L714.4,489.8L717.6,488.7L720.8,487.5L724.1,486.3L727.3,485.0L730.5,483.6L733.8,482.1L737.0,480.5L740.3,478.8L743.5,477.0L746.7,475.1L750.0,473.1L753.2,471.0L756.5,468.7L759.7,466.2L762.9,463.5L766.2,460.7L769.4,457.6L772.6,454.3L775.9,450.8L779.1,446.9L782.4,442.7L785.6,438.2L788.8,433.3L792.1,427.9L795.3,422.1L798.6,415.7L801.8,408.8L805.0,401.2L808.3,392.9L811.5,383.9L814.8,374.1L818.0,363.6L821.2,352.2L824.5,340.0L827.7,327.1L831.0,313.5L834.2,299.5L837.4,285.3L840.7,270.9L843.9,256.6L847.1,242.7L850.4,229.3L853.6,216.5L856.9,204.5L860.1,193.3L863.3,182.8L866.6,173.2L869.8,164.3L873.1,156.2L876.3,148.8L879.5,141.9L882.8,135.7L886.0,130.0L889.2,124.7L892.5,119.9L895.7,115.4L899.0,111.3L902.2,107.5L905.4,104.0L908.7,100.7L911.9,97.7L915.2,94.9L918.4,92.3L921.6,89.9L924.9,87.6L928.1,85.5L931.4,83.5L934.6,81.6L937.8,79.8L941.1,78.2L944.3,76.6L947.5,75.2L950.8,73.8L954.0,72.5L957.3,71.2L960.5,70.0L963.7,68.9L967.0,67.9L970.2,66.9L973.5,65.9L976.7,65.0L979.9,64.2L983.2,63.4L986.4,62.6L989.7,61.9L992.9,61.2L996.1,60.5L999.4,59.9L1002.6,59.2L1005.9,58.7L1009.1,58.1L1012.3,57.6L1015.6,57.1L1018.8,56.6L1022.0,56.2L1025.3,55.7L1028.5,55.3L1031.8,54.9L1035.0,54.5L1038.2,54.2L1041.5,53.9L1044.7,53.5L1048.0,53.2L1051.2,52.9L1054.4,52.7L1057.7,52.4L1060.9,52.2L1064.2,51.9L1067.4,51.7L1070.6,51.5L1073.9,51.3L1077.1,51.1L1080.3,51.0L1083.6,50.8L1086.8,50.6L1090.1,50.5L1093.3,50.4L1096.5,50.3L1099.8,50.2L1103.0,50.1L1106.3,50.0L1109.5,49.9L1112.7,49.9L1116.0,49.8L1119.2,49.8L1122.5,49.8L1125.7,49.7L1128.9,49.7L1132.2,49.7L1135.4,49.7L1138.6,49.8L1141.9,49.8L1145.1,49.8L1148.4,49.9L1151.6,50.0L1154.8,50.0L1158.1,50.1L1161.3,50.2L1164.6,50.3L1167.8,50.4L1171.0,50.5L1174.3,50.7L1177.5,50.8L1180.8,51.0L1184.0,51.2L1187.2,51.3L1190.5,51.5L1193.7,51.7L1196.9,52.0L1196.9,548.0 L-1.4,548.0 Z" fill="#000" fill-opacity="0.34"/>
<path d="M1107,49.5h29M1087,50.5h20M16,51.5h16M32,52.5h12M44,53.5h11M1041,53.5h4M55,54.5h4M1031,54.5h10M1024,55.5h7M1017,56.5h7M1010,57.5h7M1008,58.5h2M91,59.5h5M96,60.5h5M101,61.5h5M106,62.5h4M110,63.5h4M114,64.5h4M977,64.5h3M974,65.5h3M970,66.5h4M967,67.5h3M964,68.5h3M961,69.5h3M959,70.5h2M138,71.5h2M140,72.5h2M142,73.5h2M144,74.5h3M147,75.5h2M149,76.5h2M151,77.5h2M153,78.5h2M940,78.5h2M938,79.5h2M936,80.5h2M934,81.5h2M931,83.5h2M929,84.5h2M169,87.5h2M173,90.5h2M908,100.5h2M325,458.5h2M756,468.5h2M752,471.5h2M346,474.5h2M348,475.5h2M351,477.5h2M353,478.5h2M355,479.5h2M357,480.5h2M736,480.5h2M734,481.5h2M732,482.5h2M730,483.5h2M727,484.5h3M725,485.5h2M723,486.5h2M721,487.5h2M376,488.5h2M378,489.5h3M381,490.5h3M384,491.5h3M387,492.5h4M391,493.5h3M394,494.5h3M697,494.5h4M693,495.5h4M689,496.5h4M684,497.5h5M679,498.5h5M674,499.5h5M425,500.5h2M427,501.5h7M434,502.5h7M441,503.5h7M448,504.5h10M638,504.5h4M458,505.5h4M627,505.5h11M615,506.5h12M599,507.5h16M504,508.5h20M524,509.5h29M118.5,65v1M155.5,79v1M168.5,86v1M171.5,88v1M172.5,89v1M175.5,91v1M176.5,92v1M177.5,93v1M178.5,94v1M187.5,102v1M188.5,103v1M189.5,104v1M190.5,105v2M191.5,107v1M192.5,108v1M193.5,109v1M194.5,110v1M201.5,118v2M202.5,120v2M203.5,122v1M204.5,123v2M205.5,125v1M206.5,126v1M211.5,135v2M212.5,137v2M213.5,139v2M214.5,141v1M215.5,142v2M219.5,151v2M220.5,153v3M221.5,156v2M222.5,158v2M223.5,160v1M226.5,168v3M227.5,171v3M228.5,174v3M229.5,177v1M232.5,185v4M233.5,189v3M234.5,192v3M237.5,203v3M238.5,206v4M239.5,210v2M241.5,220v1M242.5,221v4M243.5,225v4M246.5,237v5M247.5,242v3M248.5,245v1M250.5,254v5M251.5,259v4M252.5,263v1M253.5,271v1M254.5,272v5M255.5,277v4M257.5,288v2M258.5,290v4M259.5,294v4M261.5,306v1M262.5,307v5M263.5,312v3M265.5,323v1M266.5,324v5M267.5,329v3M270.5,340v4M271.5,344v4M272.5,348v2M274.5,357v2M275.5,359v3M276.5,362v4M277.5,366v1M279.5,374v2M280.5,376v3M281.5,379v3M282.5,382v2M285.5,391v2M286.5,393v3M287.5,396v2M288.5,398v2M289.5,400v1M292.5,408v2M293.5,410v2M294.5,412v2M295.5,414v2M296.5,416v2M300.5,425v1M301.5,426v2M302.5,428v1M303.5,429v2M304.5,431v2M305.5,433v1M311.5,442v1M312.5,443v1M313.5,444v2M314.5,446v1M315.5,447v1M316.5,448v1M317.5,449v1M318.5,450v1M327.5,459v1M328.5,460v1M329.5,461v1M330.5,462v1M331.5,463v1M332.5,464v1M333.5,465v1M334.5,466v1M345.5,473v1M350.5,476v1M359.5,481v1M397.5,495v1M701.5,493v1M738.5,479v1M751.5,472v1M754.5,470v1M755.5,469v1M758.5,467v1M759.5,466v1M760.5,465v1M761.5,464v1M770.5,456v1M771.5,455v1M772.5,454v1M773.5,452v2M774.5,451v1M775.5,450v1M776.5,449v1M777.5,448v1M784.5,439v2M785.5,437v2M786.5,436v1M787.5,434v2M788.5,433v1M789.5,432v1M794.5,422v2M795.5,420v2M796.5,418v2M797.5,417v1M798.5,415v2M802.5,406v2M803.5,403v3M804.5,401v2M805.5,399v2M806.5,398v1M809.5,388v3M810.5,385v3M811.5,382v3M812.5,381v1M815.5,370v4M816.5,367v3M817.5,364v3M820.5,353v3M821.5,349v4M822.5,347v2M824.5,338v1M825.5,334v4M826.5,330v4M829.5,317v5M830.5,314v3M831.5,313v1M833.5,300v5M834.5,296v4M835.5,295v1M836.5,287v1M837.5,282v5M838.5,278v4M840.5,269v2M841.5,265v4M842.5,261v4M844.5,252v1M845.5,247v5M846.5,244v3M848.5,235v1M849.5,230v5M850.5,227v3M853.5,215v4M854.5,211v4M855.5,209v2M857.5,200v2M858.5,197v3M859.5,193v4M860.5,192v1M862.5,183v2M863.5,180v3M864.5,177v3M865.5,175v2M868.5,166v2M869.5,163v3M870.5,161v2M871.5,159v2M872.5,158v1M875.5,149v2M876.5,147v2M877.5,145v2M878.5,143v2M879.5,141v2M883.5,133v1M884.5,131v2M885.5,130v1M886.5,128v2M887.5,126v2M888.5,125v1M894.5,116v1M895.5,115v1M896.5,113v2M897.5,112v1M898.5,111v1M899.5,110v1M900.5,109v1M901.5,108v1M910.5,99v1M911.5,98v1M912.5,97v1M913.5,96v1M914.5,95v1M915.5,94v1M916.5,93v1M917.5,92v1M928.5,85v1M933.5,82v1M942.5,77v1M980.5,63v1" fill="none" stroke="#ff0000" stroke-width="1"/>
<path d="M1136,49.5h18M1080,50.5h7M1154,50.5h27M1064,51.5h16M1051,52.5h13M1045,53.5h6M59,54.5h5M64,55.5h7M71,56.5h8M79,57.5h6M85,58.5h6M1004,58.5h4M999,59.5h5M994,60.5h5M989,61.5h5M985,62.5h4M981,63.5h4M119,65.5h3M122,66.5h3M125,67.5h3M128,68.5h3M131,69.5h3M134,70.5h3M956,71.5h2M953,72.5h3M951,73.5h2M948,74.5h3M946,75.5h2M944,76.5h2M157,80.5h2M159,81.5h2M161,82.5h2M164,84.5h2M166,85.5h2M926,86.5h2M923,88.5h2M919,91.5h2M336,467.5h2M340,470.5h2M343,472.5h2M749,473.5h2M747,474.5h2M744,476.5h2M742,477.5h2M740,478.5h2M361,482.5h2M363,483.5h2M365,484.5h3M368,485.5h2M370,486.5h3M373,487.5h2M717,488.5h3M714,489.5h3M711,490.5h3M708,491.5h3M705,492.5h3M702,493.5h3M398,495.5h4M402,496.5h4M406,497.5h5M411,498.5h5M416,499.5h5M421,500.5h4M668,500.5h6M662,501.5h6M654,502.5h8M647,503.5h7M642,504.5h5M462,505.5h6M468,506.5h13M481,507.5h16M497,508.5h7M571,508.5h27M553,509.5h18M15.5,51v1M137.5,71v1M156.5,79v1M163.5,83v1M179.5,94v1M180.5,95v1M181.5,96v1M182.5,97v1M183.5,98v1M184.5,99v1M185.5,100v1M186.5,101v1M195.5,111v1M196.5,112v2M197.5,114v1M198.5,115v1M199.5,116v1M200.5,117v1M206.5,127v1M207.5,128v2M208.5,130v1M209.5,131v2M210.5,133v2M215.5,144v1M216.5,145v2M217.5,147v2M218.5,149v2M223.5,161v2M224.5,163v3M225.5,166v2M229.5,178v2M230.5,180v3M231.5,183v2M234.5,195v1M235.5,196v3M236.5,199v4M239.5,212v2M240.5,214v4M241.5,218v2M243.5,229v1M244.5,230v4M245.5,234v3M248.5,246v4M249.5,250v4M252.5,264v4M253.5,268v3M256.5,281v5M257.5,286v2M259.5,298v1M260.5,299v4M261.5,303v3M263.5,315v1M264.5,316v4M265.5,320v3M268.5,332v5M269.5,337v3M272.5,350v2M273.5,352v3M274.5,355v2M277.5,367v2M278.5,369v3M279.5,372v2M283.5,384v3M284.5,387v3M285.5,390v1M289.5,401v2M290.5,403v2M291.5,405v3M297.5,418v2M298.5,420v2M299.5,422v2M300.5,424v1M306.5,434v2M307.5,436v1M308.5,437v2M309.5,439v1M310.5,440v2M318.5,451v1M319.5,452v1M320.5,453v1M321.5,454v1M322.5,455v1M323.5,456v1M324.5,457v1M335.5,466v1M338.5,468v1M339.5,469v1M342.5,471v1M360.5,481v1M375.5,488v1M598.5,507v1M720.5,487v1M739.5,479v1M746.5,475v1M762.5,464v1M763.5,463v1M764.5,462v1M765.5,461v1M766.5,460v1M767.5,459v1M768.5,458v1M769.5,457v1M778.5,447v1M779.5,445v2M780.5,444v1M781.5,443v1M782.5,442v1M783.5,441v1M789.5,431v1M790.5,429v2M791.5,428v1M792.5,426v2M793.5,424v2M798.5,414v1M799.5,412v2M800.5,410v2M801.5,408v2M806.5,396v2M807.5,393v3M808.5,391v2M812.5,379v2M813.5,376v3M814.5,374v2M817.5,363v1M818.5,360v3M819.5,356v4M822.5,345v2M823.5,341v4M824.5,339v2M826.5,329v1M827.5,325v4M828.5,322v3M831.5,309v4M832.5,305v4M835.5,291v4M836.5,288v3M839.5,273v5M840.5,271v2M842.5,260v1M843.5,256v4M844.5,253v3M846.5,243v1M847.5,239v4M848.5,236v3M851.5,222v5M852.5,219v3M855.5,207v2M856.5,204v3M857.5,202v2M860.5,190v2M861.5,187v3M862.5,185v2M866.5,172v3M867.5,169v3M868.5,168v1M872.5,156v2M873.5,154v2M874.5,151v3M880.5,139v2M881.5,137v2M882.5,135v2M883.5,134v1M889.5,123v2M890.5,122v1M891.5,120v2M892.5,119v1M893.5,117v2M901.5,107v1M902.5,106v1M903.5,105v1M904.5,104v1M905.5,103v1M906.5,102v1M907.5,101v1M918.5,92v1M921.5,90v1M922.5,89v1M925.5,87v1M943.5,77v1M958.5,70v1" fill="none" stroke="#ffffff" stroke-width="1"/>
<path d="M664,127.5h39M650,128.5h14M703,128.5h15M640,129.5h10M718,129.5h9M632,130.5h8M727,130.5h8M626,131.5h6M735,131.5h7M620,132.5h6M742,132.5h6M614,133.5h6M748,133.5h5M609,134.5h5M753,134.5h5M605,135.5h4M758,135.5h5M600,136.5h5M763,136.5h4M596,137.5h4M767,137.5h4M592,138.5h4M771,138.5h4M589,139.5h3M775,139.5h4M585,140.5h4M779,140.5h3M582,141.5h3M782,141.5h4M579,142.5h3M786,142.5h3M576,143.5h3M789,143.5h3M573,144.5h3M792,144.5h3M570,145.5h3M795,145.5h3M567,146.5h3M798,146.5h3M564,147.5h3M801,147.5h2M562,148.5h2M803,148.5h3M559,149.5h3M806,149.5h2M557,150.5h2M808,150.5h3M555,151.5h2M811,151.5h2M552,152.5h3M813,152.5h2M550,153.5h2M815,153.5h3M548,154.5h2M818,154.5h2M546,155.5h2M820,155.5h2M543,156.5h3M822,156.5h2M824,157.5h2M539,158.5h3M826,158.5h2M828,159.5h2M536,160.5h2M830,160.5h2M534,161.5h2M832,161.5h2M532,162.5h2M834,162.5h2M530,163.5h2M836,163.5h2M528,164.5h2M839,165.5h2M525,166.5h2M841,166.5h2M523,167.5h2M844,168.5h2M520,169.5h2M846,169.5h2M518,170.5h2M849,171.5h2M515,172.5h2M852,173.5h2M512,174.5h2M855,175.5h2M509,176.5h2M858,177.5h2M506,178.5h2M862,180.5h2M502,181.5h2M865,182.5h2M498,184.5h2M869,185.5h2M493,188.5h2M875,190.5h2M488,192.5h2M880,194.5h2M480,199.5h2M891,204.5h2M266,357.5h2M258,364.5h2M252,369.5h2M247,373.5h2M244,375.5h2M240,378.5h2M236,381.5h2M233,383.5h2M230,385.5h2M227,387.5h2M225,388.5h2M222,390.5h2M220,391.5h2M217,393.5h2M215,394.5h2M213,395.5h2M211,396.5h2M209,397.5h2M207,398.5h2M205,399.5h2M203,400.5h2M201,401.5h2M199,402.5h2M197,403.5h2M195,404.5h2M192,405.5h3M190,406.5h2M188,407.5h2M185,408.5h3M183,409.5h2M180,410.5h3M177,411.5h3M174,412.5h3M171,413.5h3M168,414.5h3M165,415.5h3M162,416.5h3M158,417.5h4M155,418.5h3M151,419.5h4M147,420.5h4M143,421.5h4M142.5,422v1M219.5,392v1M224.5,389v1M229.5,386v1M232.5,384v1M235.5,382v1M238.5,380v1M239.5,379v1M242.5,377v1M243.5,376v1M246.5,374v1M249.5,372v1M250.5,371v1M251.5,370v1M254.5,368v1M255.5,367v1M256.5,366v1M257.5,365v1M260.5,363v1M261.5,362v1M262.5,361v1M263.5,360v1M264.5,359v1M265.5,358v1M268.5,356v1M269.5,355v1M270.5,354v1M271.5,353v1M272.5,352v1M273.5,351v1M274.5,350v1M275.5,349v1M276.5,348v1M277.5,347v1M278.5,346v1M279.5,345v1M280.5,344v1M281.5,343v1M282.5,342v1M283.5,341v1M284.5,340v1M285.5,339v1M286.5,338v1M287.5,337v1M288.5,336v1M289.5,335v1M290.5,334v1M291.5,333v1M292.5,332v1M293.5,331v1M294.5,330v1M295.5,329v1M296.5,328v1M297.5,326v2M298.5,325v1M299.5,324v1M300.5,323v1M301.5,322v1M302.5,321v1M303.5,320v1M304.5,318v2M305.5,317v1M306.5,316v1M307.5,315v1M308.5,313v2M309.5,312v1M310.5,311v1M311.5,310v1M312.5,309v1M313.5,307v2M314.5,306v1M315.5,305v1M316.5,304v1M317.5,302v2M318.5,301v1M319.5,300v1M320.5,299v1M321.5,298v1M322.5,296v2M323.5,295v1M324.5,294v1M325.5,292v2M326.5,291v1M327.5,290v1M328.5,289v1M329.5,287v2M330.5,286v1M331.5,285v1M332.5,284v1M333.5,282v2M334.5,281v1M335.5,280v1M336.5,278v2M337.5,277v1M338.5,276v1M339.5,275v1M340.5,273v2M341.5,272v1M342.5,271v1M343.5,270v1M344.5,268v2M345.5,267v1M346.5,266v1M347.5,264v2M348.5,263v1M349.5,262v1M350.5,261v1M351.5,259v2M352.5,258v1M353.5,257v1M354.5,256v1M355.5,254v2M356.5,253v1M357.5,252v1M358.5,251v1M359.5,250v1M360.5,248v2M361.5,247v1M362.5,246v1M363.5,245v1M364.5,243v2M365.5,242v1M366.5,241v1M367.5,240v1M368.5,239v1M369.5,238v1M370.5,236v2M371.5,235v1M372.5,234v1M373.5,233v1M374.5,232v1M375.5,231v1M376.5,230v1M377.5,228v2M378.5,227v1M379.5,226v1M380.5,225v1M381.5,224v1M382.5,223v1M383.5,222v1M384.5,221v1M385.5,220v1M386.5,219v1M387.5,218v1M388.5,217v1M389.5,216v1M390.5,215v1M391.5,213v2M392.5,212v1M393.5,211v1M394.5,210v1M395.5,209v1M396.5,208v1M397.5,207v1M398.5,206v1M399.5,205v1M400.5,204v1M401.5,203v1M402.5,202v1M403.5,201v1M478.5,201v1M479.5,200v1M482.5,198v1M483.5,197v1M484.5,196v1M485.5,195v1M486.5,194v1M487.5,193v1M490.5,191v1M491.5,190v1M492.5,189v1M495.5,187v1M496.5,186v1M497.5,185v1M500.5,183v1M501.5,182v1M504.5,180v1M505.5,179v1M508.5,177v1M511.5,175v1M514.5,173v1M517.5,171v1M522.5,168v1M527.5,165v1M538.5,159v1M542.5,157v1M838.5,164v1M843.5,167v1M848.5,170v1M851.5,172v1M854.5,174v1M857.5,176v1M860.5,178v1M861.5,179v1M864.5,181v1M867.5,183v1M868.5,184v1M871.5,186v1M872.5,187v1M873.5,188v1M874.5,189v1M877.5,191v1M878.5,192v1M879.5,193v1M882.5,195v1M883.5,196v1M884.5,197v1M885.5,198v1M886.5,199v1M887.5,200v1M888.5,201v1M889.5,202v1M890.5,203v1M893.5,205v1M894.5,206v1M895.5,207v1M896.5,208v1M897.5,209v1M898.5,210v1M899.5,211v1" fill="none" stroke="#ffe818" stroke-width="1"/>
<path d="M1030,362.5h2M1037,368.5h2M1041,371.5h2M1046,375.5h2M1050,378.5h2M1053,380.5h2M1056,382.5h2M1059,384.5h2M1062,386.5h2M1065,388.5h2M1067,389.5h2M1070,391.5h2M1072,392.5h2M1075,394.5h2M1077,395.5h2M1079,396.5h2M1081,397.5h2M1083,398.5h2M1085,399.5h2M1087,400.5h2M1089,401.5h2M1091,402.5h2M1093,403.5h2M1095,404.5h3M1098,405.5h2M1100,406.5h2M1102,407.5h3M1105,408.5h2M1107,409.5h3M1110,410.5h2M1112,411.5h3M1115,412.5h3M1118,413.5h3M1121,414.5h3M1124,415.5h3M1127,416.5h4M1131,417.5h3M1134,418.5h4M1138,419.5h4M1142,420.5h4M1146,421.5h4M138,422.5h4M1150,422.5h5M133,423.5h5M1155,423.5h5M127,424.5h6M1160,424.5h5M121,425.5h6M1165,425.5h6M114,426.5h7M1171,426.5h7M15,427.5h5M107,427.5h7M1178,427.5h2M20,428.5h10M97,428.5h10M30,429.5h14M82,429.5h15M44,430.5h38M900.5,212v1M901.5,213v1M902.5,214v1M903.5,215v1M904.5,216v1M905.5,217v1M906.5,218v1M907.5,219v1M908.5,220v1M909.5,221v1M910.5,222v1M911.5,223v1M912.5,224v1M913.5,225v1M914.5,226v1M915.5,227v2M916.5,229v1M917.5,230v1M918.5,231v1M919.5,232v1M920.5,233v1M921.5,234v1M922.5,235v2M923.5,237v1M924.5,238v1M925.5,239v1M926.5,240v1M927.5,241v2M928.5,243v1M929.5,244v1M930.5,245v1M931.5,246v1M932.5,247v2M933.5,249v1M934.5,250v1M935.5,251v1M936.5,252v1M937.5,253v2M938.5,255v1M939.5,256v1M940.5,257v2M941.5,259v1M942.5,260v1M943.5,261v1M944.5,262v2M945.5,264v1M946.5,265v1M947.5,266v1M948.5,267v2M949.5,269v1M950.5,270v1M951.5,271v1M952.5,272v2M953.5,274v1M954.5,275v1M955.5,276v2M956.5,278v1M957.5,279v1M958.5,280v1M959.5,281v2M960.5,283v1M961.5,284v1M962.5,285v1M963.5,286v2M964.5,288v1M965.5,289v1M966.5,290v2M967.5,292v1M968.5,293v1M969.5,294v1M970.5,295v1M971.5,296v2M972.5,298v1M973.5,299v1M974.5,300v2M975.5,302v1M976.5,303v1M977.5,304v1M978.5,305v2M979.5,307v1M980.5,308v1M981.5,309v1M982.5,310v1M983.5,311v2M984.5,313v1M985.5,314v1M986.5,315v1M987.5,316v1M988.5,317v1M989.5,318v2M990.5,320v1M991.5,321v1M992.5,322v1M993.5,323v1M994.5,324v1M995.5,325v2M996.5,327v1M997.5,328v1M998.5,329v1M999.5,330v1M1000.5,331v1M1001.5,332v1M1002.5,333v1M1003.5,334v1M1004.5,335v2M1005.5,337v1M1006.5,338v1M1007.5,339v1M1008.5,340v1M1009.5,341v1M1010.5,342v1M1011.5,343v1M1012.5,344v1M1013.5,345v1M1014.5,346v1M1015.5,347v1M1016.5,348v1M1017.5,349v1M1018.5,350v1M1019.5,351v1M1020.5,352v1M1021.5,353v1M1022.5,354v1M1023.5,355v1M1024.5,356v1M1025.5,357v1M1026.5,358v1M1027.5,359v1M1028.5,360v1M1029.5,361v1M1032.5,363v1M1033.5,364v1M1034.5,365v1M1035.5,366v1M1036.5,367v1M1039.5,369v1M1040.5,370v1M1043.5,372v1M1044.5,373v1M1045.5,374v1M1048.5,376v1M1049.5,377v1M1052.5,379v1M1055.5,381v1M1058.5,383v1M1061.5,385v1M1064.5,387v1M1069.5,390v1M1074.5,393v1" fill="none" stroke="#f08078" stroke-width="1"/>
<path d="M465,143.5h27M458,144.5h7M492,144.5h7M453,145.5h5M499,145.5h5M450,146.5h3M504,146.5h4M446,147.5h4M508,147.5h3M443,148.5h3M511,148.5h3M441,149.5h2M514,149.5h2M438,150.5h3M516,150.5h3M436,151.5h2M519,151.5h2M434,152.5h2M521,152.5h2M432,153.5h2M523,153.5h2M429,155.5h2M526,155.5h2M426,157.5h2M529,157.5h2M533,160.5h2M431,244.5h2M523,246.5h2M435,247.5h2M520,248.5h2M438,249.5h2M518,249.5h2M440,250.5h2M442,251.5h2M515,251.5h2M444,252.5h2M513,252.5h2M446,253.5h2M511,253.5h2M448,254.5h2M508,254.5h3M450,255.5h3M506,255.5h2M453,256.5h3M503,256.5h3M456,257.5h3M499,257.5h4M459,258.5h4M495,258.5h4M463,259.5h7M489,259.5h6M470,260.5h19M406.5,188v18M407.5,184v4M407.5,206v5M408.5,181v3M408.5,211v3M409.5,178v3M409.5,214v3M410.5,176v2M410.5,217v2M411.5,174v2M411.5,219v2M412.5,173v1M412.5,221v2M413.5,171v2M413.5,223v2M414.5,170v1M414.5,225v2M415.5,168v2M415.5,227v1M416.5,167v1M416.5,228v2M417.5,166v1M417.5,230v1M418.5,165v1M418.5,231v1M419.5,164v1M419.5,232v1M420.5,163v1M420.5,233v1M421.5,162v1M421.5,234v1M422.5,161v1M422.5,235v1M423.5,160v1M423.5,236v1M424.5,159v1M424.5,237v1M425.5,158v1M425.5,238v1M426.5,239v1M427.5,240v1M428.5,156v1M428.5,241v1M429.5,242v1M430.5,243v1M431.5,154v1M433.5,245v1M434.5,246v1M437.5,248v1M517.5,250v1M522.5,247v1M525.5,154v1M525.5,245v1M526.5,244v1M527.5,243v1M528.5,156v1M528.5,242v1M529.5,241v1M530.5,240v1M531.5,158v1M531.5,239v1M532.5,159v1M532.5,238v1M533.5,237v1M534.5,236v1M535.5,161v1M535.5,235v1M536.5,162v1M536.5,234v1M537.5,163v1M537.5,233v1M538.5,164v1M538.5,231v2M539.5,165v1M539.5,230v1M540.5,166v1M540.5,229v1M541.5,167v1M541.5,227v2M542.5,168v1M542.5,225v2M543.5,169v2M543.5,224v1M544.5,171v1M544.5,222v2M545.5,172v2M545.5,220v2M546.5,174v2M546.5,218v2M547.5,176v2M547.5,215v3M548.5,178v3M548.5,212v3M549.5,181v3M549.5,209v3M550.5,184v4M550.5,204v5M551.5,188v16" fill="none" stroke="#10f020" stroke-width="1"/>
<path d="M556.9,245.3L554.8,246.7L556.4,248.7L553.9,249.3L554.8,251.7L552.3,251.6L552.4,254.1L550.0,253.2L549.4,255.7L547.4,254.1L546.0,256.2L544.6,254.1L542.6,255.7L542.0,253.2L539.6,254.1L539.7,251.6L537.2,251.7L538.1,249.3L535.6,248.7L537.2,246.7L535.1,245.3L537.2,243.9L535.6,241.9L538.1,241.3L537.2,238.9L539.7,239.0L539.6,236.5L542.0,237.4L542.6,234.9L544.6,236.5L546.0,234.4L547.4,236.5L549.4,234.9L550.0,237.4L552.4,236.5L552.3,239.0L554.8,238.9L553.9,241.3L556.4,241.9L554.8,243.9Z" fill="#ffff00"/>
<g shape-rendering="auto"><circle cx="851" cy="328.500" r="10" fill="#5c6064"/><path d="M851,318.500 A10,10 0 0 1 851,338.500Z" fill="#c6cad0"/><circle cx="855.500" cy="324.500" r="2" fill="#a4a8b0"/><circle cx="854" cy="333" r="1.600" fill="#aeb2b8"/><circle cx="847" cy="326" r="2" fill="#6c7074"/></g>
<circle cx="479.0" cy="202.2" r="3.050" fill="#fdfdf6" shape-rendering="auto"/>
</g>
<path d="M631,109.500h7M634.500,106v7" stroke="#fff" stroke-width="1" fill="none"/>
</svg>
<span class="t" style="left:57.31px;top:3.55px;transform:scaleX(0.8600);font-size:8.8px;line-height:8.8px;color:#fff;font-weight:bold;">120</span>
<span class="t" style="left:157.52px;top:3.55px;transform:scaleX(0.8600);font-size:8.8px;line-height:8.8px;color:#fff;font-weight:bold;">90</span>
<span class="t" style="left:254.50px;top:3.55px;transform:scaleX(0.8600);font-size:8.8px;line-height:8.8px;color:#fff;font-weight:bold;">60</span>
<span class="t" style="left:351.56px;top:3.55px;transform:scaleX(0.8600);font-size:8.8px;line-height:8.8px;color:#fff;font-weight:bold;">30</span>
<span class="t" style="left:450.60px;top:3.55px;transform:scaleX(0.8600);font-size:8.8px;line-height:8.8px;color:#fff;font-weight:bold;">0</span>
<span class="t" style="left:545.56px;top:3.55px;transform:scaleX(0.8600);font-size:8.8px;line-height:8.8px;color:#fff;font-weight:bold;">30</span>
<span class="t" style="left:642.50px;top:3.55px;transform:scaleX(0.8600);font-size:8.8px;line-height:8.8px;color:#fff;font-weight:bold;">60</span>
<span class="t" style="left:740.52px;top:3.55px;transform:scaleX(0.8600);font-size:8.8px;line-height:8.8px;color:#fff;font-weight:bold;">90</span>
<span class="t" style="left:835.31px;top:3.55px;transform:scaleX(0.8600);font-size:8.8px;line-height:8.8px;color:#fff;font-weight:bold;">120</span>
<span class="t" style="left:932.31px;top:3.55px;transform:scaleX(0.8600);font-size:8.8px;line-height:8.8px;color:#fff;font-weight:bold;">150</span>
<span class="t" style="left:1029.31px;top:3.55px;transform:scaleX(0.8600);font-size:8.8px;line-height:8.8px;color:#fff;font-weight:bold;">180</span>
<span class="t" style="left:1126.31px;top:3.55px;transform:scaleX(0.8600);font-size:8.8px;line-height:8.8px;color:#fff;font-weight:bold;">150</span>
<span class="t" style="left:401.18px;top:3.55px;transform:scaleX(0.9000);font-size:8.8px;line-height:8.8px;color:#8c8c8c;">З</span>
<span class="t" style="left:498.75px;top:3.55px;transform:scaleX(0.9000);font-size:8.8px;line-height:8.8px;color:#8c8c8c;">В</span>
<span class="t" style="left:983.75px;top:3.55px;transform:scaleX(0.9000);font-size:8.8px;line-height:8.8px;color:#8c8c8c;">В</span>
<span class="t" style="left:1082.18px;top:3.55px;transform:scaleX(0.9000);font-size:8.8px;line-height:8.8px;color:#8c8c8c;">З</span>
<span class="t" style="left:4.06px;top:99.75px;transform:scaleX(0.8600);font-size:8.8px;line-height:8.8px;color:#fff;font-weight:bold;">60</span>
<span class="t" style="left:4.06px;top:187.75px;transform:scaleX(0.8600);font-size:8.8px;line-height:8.8px;color:#fff;font-weight:bold;">30</span>
<span class="t" style="left:8.26px;top:275.75px;transform:scaleX(0.8600);font-size:8.8px;line-height:8.8px;color:#fff;font-weight:bold;">0</span>
<span class="t" style="left:4.06px;top:363.75px;transform:scaleX(0.8600);font-size:8.8px;line-height:8.8px;color:#fff;font-weight:bold;">30</span>
<span class="t" style="left:4.06px;top:451.75px;transform:scaleX(0.8600);font-size:8.8px;line-height:8.8px;color:#fff;font-weight:bold;">60</span>
<span class="t" style="left:6.77px;top:55.75px;transform:scaleX(0.9000);font-size:8.8px;line-height:8.8px;color:#8c8c8c;">С</span>
<span class="t" style="left:6.77px;top:231.75px;transform:scaleX(0.9000);font-size:8.8px;line-height:8.8px;color:#8c8c8c;">С</span>
<span class="t" style="left:4.56px;top:319.75px;transform:scaleX(0.9000);font-size:8.8px;line-height:8.8px;color:#8c8c8c;">Ю</span>
<span class="t" style="left:4.56px;top:495.75px;transform:scaleX(0.9000);font-size:8.8px;line-height:8.8px;color:#8c8c8c;">Ю</span>
<span class="t" style="left:488.51px;top:196.00px;transform:scaleX(0.8420);color:#fff;text-shadow:1px 1px 0 rgba(20,20,0,.55);">ISS</span>
<span class="t" style="left:639.95px;top:103.00px;transform:scaleX(0.8155);color:#fff;text-shadow:1px 1px 0 rgba(20,20,0,.55);">Perm</span>
<span class="t" style="left:14.95px;top:544.00px;transform:scaleX(0.8153);color:#fff;">Perm: 56.2359° В, 58.0037° С</span>
<span class="t" style="left:1021.27px;top:544.00px;transform:scaleX(0.8188);color:#fff;">2015-08-23 15:06:38 (UTC +5:00)</span>
<div class="abs" style="left:1357px;top:5px;width:5px;height:3px;background:#808080;border-radius:1.5px"></div>
<div id="list"><div class="rows">
<i class="cb" style="top:1px"></i>
<span class="t" style="left:17.20px;top:-0.00px;transform:scaleX(0.8489);">AAUSAT3</span>
<i class="cb" style="top:14px"></i>
<span class="t" style="left:16.84px;top:13.00px;transform:scaleX(0.8223);">BEESAT</span>
<i class="cb" style="top:27px"></i>
<span class="t" style="left:16.82px;top:26.00px;transform:scaleX(0.8465);">BEESAT-2</span>
<i class="cb" style="top:40px"></i>
<span class="t" style="left:17.17px;top:39.00px;transform:scaleX(0.8198);">CHUBUSAT-1</span>
<i class="cb" style="top:53px"></i>
<span class="t" style="left:17.18px;top:52.00px;transform:scaleX(0.8065);">CUBEBUG-1 (CAPITAN B</span>
<i class="cb" style="top:66px"></i>
<span class="t" style="left:17.18px;top:65.00px;transform:scaleX(0.8018);">CUBEBUG-2 (LO-74)</span>
<i class="cb" style="top:79px"></i>
<span class="t" style="left:17.18px;top:78.00px;transform:scaleX(0.8062);">CUBESAT XI-IV (CO-57)</span>
<i class="cb" style="top:92px"></i>
<span class="t" style="left:17.18px;top:91.00px;transform:scaleX(0.8072);">CUBESAT XI-V (CO-58)</span>
<i class="cb" style="top:105px"></i>
<span class="t" style="left:17.18px;top:104.00px;transform:scaleX(0.7968);">CUTE-1 (CO-55)</span>
<i class="cb" style="top:118px"></i>
<span class="t" style="left:17.17px;top:117.00px;transform:scaleX(0.8185);">CUTE-1.7+APD II (CO-65)</span>
<i class="cb" style="top:131px"></i>
<span class="t" style="left:16.87px;top:130.00px;transform:scaleX(0.8026);">DELFI-C3 (DO-64)</span>
<i class="cb" style="top:144px"></i>
<span class="t" style="left:16.84px;top:143.00px;transform:scaleX(0.8300);">DUCHIFAT-1</span>
<i class="cb" style="top:157px"></i>
<span class="t" style="left:16.84px;top:156.00px;transform:scaleX(0.8234);">EAGLE 2</span>
<i class="cb" style="top:170px"></i>
<span class="t" style="left:16.85px;top:169.00px;transform:scaleX(0.8178);">EYESAT-1 (AO-27)</span>
<i class="cb" style="top:183px"></i>
<span class="t" style="left:16.86px;top:182.00px;transform:scaleX(0.8043);">FUNCUBE-1 (AO-73)</span>
<i class="cb" style="top:196px"></i>
<span class="t" style="left:17.19px;top:195.00px;transform:scaleX(0.7905);">GOMX 1</span>
<i class="cb" style="top:209px"></i>
<span class="t" style="left:16.84px;top:208.00px;transform:scaleX(0.8237);">HAMSAT (VO-52)</span>
<i class="cb" style="top:222px"></i>
<span class="t" style="left:16.82px;top:221.00px;transform:scaleX(0.8497);">HORYU 2</span>
<i class="cb" style="top:235px"></i>
<span class="t" style="left:16.82px;top:234.00px;transform:scaleX(0.8504);">HUMSAT-D</span>
<div class="selbg" style="left:15px;top:247px;width:124px;height:13px"></div>
<i class="cb" style="top:248px"><svg width="11" height="11" viewBox="0 0 11 11" style="position:absolute;left:-1px;top:-1px"><path d="M2.300,5 L4.500,7.500 L8.700,2.600" stroke="#000" stroke-width="2" fill="none"/></svg></i>
<span class="t" style="left:16.75px;top:247.00px;transform:scaleX(0.8108);color:#fff;">ISS</span>
<i class="cb" style="top:261px"></i>
<span class="t" style="left:16.72px;top:260.00px;transform:scaleX(0.8378);">ITAMSAT (IO-26)</span>
<i class="cb" style="top:274px"></i>
<span class="t" style="left:16.71px;top:273.00px;transform:scaleX(0.8473);">ITUPSAT 1</span>
<i class="cb" style="top:287px"></i>
<span class="t" style="left:16.75px;top:286.00px;transform:scaleX(0.7848);">JAS-2 (FO-29)</span>
<i class="cb" style="top:300px"></i>
<span class="t" style="left:16.74px;top:299.00px;transform:scaleX(0.8083);">JUGNU</span>
<i class="cb" style="top:313px"></i>
<span class="t" style="left:16.87px;top:312.00px;transform:scaleX(0.8026);">KKS-1 (KISEKI)</span>
<i class="cb" style="top:326px"></i>
<span class="t" style="left:16.84px;top:325.00px;transform:scaleX(0.8271);">LUSAT (LO-19)</span>
<i class="cb" style="top:339px"></i>
<span class="t" style="left:16.86px;top:338.00px;transform:scaleX(0.8057);">M-CUBED &amp; EXP-1 PRIM</span>
<i class="cb" style="top:352px"></i>
<span class="t" style="left:16.84px;top:351.00px;transform:scaleX(0.8282);">MOZHAYETS 4 (RS-22)</span>
<i class="cb" style="top:365px"></i>
<span class="t" style="left:17.23px;top:364.00px;transform:scaleX(0.7962);">OSCAR 7 (AO-7)</span>
<i class="cb" style="top:378px"></i>
<span class="t" style="left:16.85px;top:377.00px;transform:scaleX(0.8193);">PCSAT (NO-44)</span>
<i class="cb" style="top:391px"></i>
<span class="t" style="left:16.84px;top:390.00px;transform:scaleX(0.8296);">PRISM (HITOMI)</span>
<i class="cb" style="top:404px"></i>
<span class="t" style="left:16.84px;top:403.00px;transform:scaleX(0.8232);">RADIO ROSTO (RS-15)</span>
<i class="cb" style="top:417px"></i>
<span class="t" style="left:17.22px;top:416.00px;transform:scaleX(0.8179);">SAUDISAT 1C (SO-50)</span>
</div>
<div class="sb" style="left:140px;top:0;width:15px;height:421px"></div>
<div class="thumb" style="left:140px;top:17px;width:15px;height:258px"></div>
<svg class="abs" style="left:140px;top:0" width="15" height="421" viewBox="0 0 15 421"><path d="M4.500,11 L7.500,7.500 L10.500,11" stroke="#606060" stroke-width="2.200" fill="none"/><path d="M4.500,410.500 L7.500,414 L10.500,410.500" stroke="#606060" stroke-width="2.200" fill="none"/></svg>
</div>
<div class="btn" style="left:1199px;top:463px;width:76px;height:25px"></div>
<div class="btn" style="left:1282px;top:463px;width:75px;height:25px"></div>
<span class="t" style="left:1202.56px;top:468.00px;transform:scaleX(0.8659);color:#000;"><u>З</u>агрузка TLE</span>
<span class="t" style="left:1289.76px;top:468.00px;transform:scaleX(0.8259);color:#000;"><u>С</u>ледующий</span>
<div id="clock"><div class="h" style="left:0;width:40px;border-right:1px solid #d4d4d4"></div><div class="h" style="left:40px;width:78px;border-right:1px solid #d4d4d4"></div><div class="h" style="left:118px;width:38px"></div></div>
<span class="t" style="left:1207.76px;top:505.69px;transform:scaleX(1.0000);font-size:11px;line-height:11px;color:#ff0000;font-weight:bold;">СЧС</span>
<span class="t" style="left:1260.07px;top:505.69px;transform:scaleX(0.9535);font-size:11px;line-height:11px;color:#ff0000;font-weight:bold;">ВРЕМЯ</span>
<span class="t" style="left:1325.40px;top:505.69px;transform:scaleX(1.0000);font-size:11px;line-height:11px;color:#ff0000;font-weight:bold;">МСТ</span>
<span class="t" style="left:1233.31px;top:526.53px;transform:scaleX(1.0000);font-size:23px;line-height:23px;color:#00f000;">15:06:40</span>
<span class="t" style="left:1217.52px;top:553.53px;transform:scaleX(1.0262);font-size:23px;line-height:23px;color:#00f000;">2015-08-23</span>
<svg width="170" height="166" viewBox="1192 587 170 166" style="position:absolute;left:1192px;top:587px">
<defs><radialGradient id="glow" cx="50%" cy="50%" r="50%"><stop offset="0" stop-color="#000"/><stop offset="0.350" stop-color="#08080c"/><stop offset="0.620" stop-color="#15151d"/><stop offset="0.820" stop-color="#0e0e14"/><stop offset="1" stop-color="#000"/></radialGradient><filter id="bl" x="-20%" y="-20%" width="140%" height="140%"><feGaussianBlur stdDeviation="0.700"/></filter></defs>
<circle cx="1281.5" cy="675.5" r="66" fill="url(#glow)"/>
<g fill="none" stroke="#2c2c48" stroke-width="1.200" opacity="0.800"><ellipse cx="1283" cy="672" rx="52" ry="30" transform="rotate(-28 1283 672)"/><ellipse cx="1281" cy="676" rx="58" ry="22" transform="rotate(24 1281 676)"/></g>
<g fill="#49492c">
<path d="M1211.900,664.300 L1231.300,647.400 L1258,644.500 L1249,657.500Z"/>
<path d="M1214.400,697.900 L1249.100,663.500 L1266,659.300 L1258,672 L1245.700,696.500Z"/>
<path d="M1283,617.800 L1302.400,611.500 L1292.300,627.900 L1278.700,630.500Z"/>
<path d="M1288,643.200 L1335.400,627.100 L1320.200,654.200 L1283,650Z"/>
<path d="M1249,656 Q1252,645 1264,640 Q1276,632 1286,636 L1290,644 L1280,651 L1296,653 L1303,660 L1306,668 L1300,681 L1308,684 L1302,690 L1288,689 L1271,690.500 L1259,680 L1265,662 L1251,665Z"/>
<circle cx="1253.300" cy="620.300" r="2.800"/>
<path d="M1254.500,622 L1267.700,643.200" stroke="#49492c" stroke-width="1.800" fill="none"/>
</g>
<path d="M1262,647 Q1275,640 1288,645 M1258,662 L1266,660 L1259,676 M1283,650 Q1296,654 1300,668" stroke="#000" stroke-width="1.300" fill="none" opacity="0.850"/>
<text x="1248" y="709" font-family="'Liberation Serif',serif" font-style="italic" font-weight="bold" font-size="22" fill="#4c1d1d" textLength="92" lengthAdjust="spacingAndGlyphs" filter="url(#bl)">Orbitron</text>
<circle cx="1277.5" cy="669.5" r="12.5" fill="none" stroke="#6c6c6c" stroke-width="1"/>
<circle cx="1277.5" cy="669.5" r="25.0" fill="none" stroke="#808080" stroke-width="1"/>
<circle cx="1277.5" cy="669.5" r="37.5" fill="none" stroke="#909090" stroke-width="1"/>
<circle cx="1277.5" cy="669.5" r="50.0" fill="none" stroke="#9c9c9c" stroke-width="1"/>
<circle cx="1277.5" cy="669.5" r="62.5" fill="none" stroke="#a8a8a8" stroke-width="1"/>
<circle cx="1277.5" cy="669.5" r="75.0" fill="none" stroke="#c0c0c0" stroke-width="1"/>
<path d="M1202.5,669.5h150M1277.5,594.5v150" stroke="#b0b0b0" stroke-width="1" fill="none"/>
</svg>
<div id="panel"></div>
<div id="lv"><div class="in"><div class="rows">
<span class="cl" style="left:0.90px;top:2px;width:105.10px"><span class="t" style="left:1.15px;top:-0.00px;transform:scaleX(0.8159);">Время - МСТ</span></span>
<span class="cl" style="left:105.70px;top:2px;width:125.30px"><span class="t" style="left:1.46px;top:-0.00px;transform:scaleX(0.8290);">Спутник</span></span>
<span class="cl" style="left:230.40px;top:2px;width:45.60px"><span class="t" style="left:2.00px;top:-0.00px;transform:scaleX(0.8654);">Азим.</span></span>
<span class="cl" style="left:275.80px;top:2px;width:35.20px"><span class="t" style="left:1.08px;top:-0.00px;transform:scaleX(0.8830);">Выс.</span></span>
<span class="cl" style="left:311.20px;top:2px;width:33.80px"><span class="t" style="left:1.69px;top:-0.00px;transform:scaleX(0.8050);">Зв.вел.</span></span>
<span class="cl" style="left:345.20px;top:2px;width:43.80px"><span class="t" style="left:1.94px;top:-0.00px;transform:scaleX(0.9217);">Дист.</span></span>
<span class="cl" style="left:388.80px;top:2px;width:45.20px"><span class="t" style="left:1.44px;top:-0.00px;transform:scaleX(0.8645);">С.азим.</span></span>
<span class="cl" style="left:434.20px;top:2px;width:34.30px"><span class="t" style="left:1.46px;top:-0.00px;transform:scaleX(0.8331);">С.выс.</span></span>
<div class="selbg foc" style="left:0;top:18px;width:468px;height:18px"></div>
<span class="cl" style="left:0.90px;top:20px;width:105.10px"><span class="t" style="left:1.46px;top:-0.00px;transform:scaleX(0.8232);color:#fff;">2015-08-23 15:16:06</span></span>
<span class="cl" style="left:105.70px;top:20px;width:125.30px"><span class="t" style="left:1.05px;top:-0.00px;transform:scaleX(0.8108);color:#fff;">ISS</span></span>
<span class="cl" style="left:230.40px;top:20px;width:45.60px"><span class="t" style="left:1.46px;top:-0.00px;transform:scaleX(0.8300);color:#fff;">221.2</span></span>
<span class="cl" style="left:275.80px;top:20px;width:35.20px"><span class="t" style="left:1.19px;top:-0.00px;transform:scaleX(0.8300);color:#fff;">10.0</span></span>
<span class="cl" style="left:311.20px;top:20px;width:33.80px"><span class="t" style="left:1.46px;top:-0.00px;transform:scaleX(0.8300);color:#fff;">2.9</span></span>
<span class="cl" style="left:345.20px;top:20px;width:43.80px"><span class="t" style="left:1.19px;top:-0.00px;transform:scaleX(0.8300);color:#fff;">1460</span></span>
<span class="cl" style="left:388.80px;top:20px;width:45.20px"><span class="t" style="left:1.46px;top:-0.00px;transform:scaleX(0.8300);color:#fff;">218.1</span></span>
<span class="cl" style="left:434.20px;top:20px;width:34.30px"><span class="t" style="left:1.62px;top:-0.00px;transform:scaleX(0.8300);color:#fff;">38.4</span></span>
<span class="cl" style="left:0.90px;top:38px;width:105.10px"><span class="t" style="left:1.46px;top:-0.00px;transform:scaleX(0.8232);">2015-08-23 15:18:45</span></span>
<span class="cl" style="left:105.70px;top:38px;width:125.30px"><span class="t" style="left:1.05px;top:-0.00px;transform:scaleX(0.8108);">ISS</span></span>
<span class="cl" style="left:230.40px;top:38px;width:45.60px"><span class="t" style="left:1.19px;top:-0.00px;transform:scaleX(0.8300);">167.1</span></span>
<span class="cl" style="left:275.80px;top:38px;width:35.20px"><span class="t" style="left:1.46px;top:-0.00px;transform:scaleX(0.8300);">22.8</span></span>
<span class="cl" style="left:311.20px;top:38px;width:33.80px"><span class="t" style="left:1.19px;top:-0.00px;transform:scaleX(0.8300);">1.5</span></span>
<span class="cl" style="left:345.20px;top:38px;width:43.80px"><span class="t" style="left:1.51px;top:-0.00px;transform:scaleX(0.8300);">913</span></span>
<span class="cl" style="left:388.80px;top:38px;width:45.20px"><span class="t" style="left:1.46px;top:-0.00px;transform:scaleX(0.8300);">218.9</span></span>
<span class="cl" style="left:434.20px;top:38px;width:34.30px"><span class="t" style="left:1.62px;top:-0.00px;transform:scaleX(0.8300);">38.1</span></span>
<span class="cl" style="left:0.90px;top:56px;width:105.10px"><span class="t" style="left:1.47px;top:-0.00px;transform:scaleX(0.8218);">2015-08-23 15:21:24</span></span>
<span class="cl" style="left:105.70px;top:56px;width:125.30px"><span class="t" style="left:1.05px;top:-0.00px;transform:scaleX(0.8108);">ISS</span></span>
<span class="cl" style="left:230.40px;top:56px;width:45.60px"><span class="t" style="left:1.19px;top:-0.00px;transform:scaleX(0.8300);">112.8</span></span>
<span class="cl" style="left:275.80px;top:56px;width:35.20px"><span class="t" style="left:1.19px;top:-0.00px;transform:scaleX(0.8300);">10.1</span></span>
<span class="cl" style="left:311.20px;top:56px;width:33.80px"><span class="t" style="left:1.46px;top:-0.00px;transform:scaleX(0.8300);">2.2</span></span>
<span class="cl" style="left:345.20px;top:56px;width:43.80px"><span class="t" style="left:1.19px;top:-0.00px;transform:scaleX(0.8300);">1458</span></span>
<span class="cl" style="left:388.80px;top:56px;width:45.20px"><span class="t" style="left:1.46px;top:-0.00px;transform:scaleX(0.8300);">219.6</span></span>
<span class="cl" style="left:434.20px;top:56px;width:34.30px"><span class="t" style="left:1.62px;top:-0.00px;transform:scaleX(0.8300);">37.9</span></span>
<span class="cl" style="left:0.90px;top:92px;width:105.10px"><span class="t" style="left:1.46px;top:-0.00px;transform:scaleX(0.8232);">2015-08-23 16:51:48</span></span>
<span class="cl" style="left:105.70px;top:92px;width:125.30px"><span class="t" style="left:1.05px;top:-0.00px;transform:scaleX(0.8108);">ISS</span></span>
<span class="cl" style="left:230.40px;top:92px;width:45.60px"><span class="t" style="left:1.46px;top:-0.00px;transform:scaleX(0.8300);">244.9</span></span>
<span class="cl" style="left:275.80px;top:92px;width:35.20px"><span class="t" style="left:1.19px;top:-0.00px;transform:scaleX(0.8300);">10.0</span></span>
<span class="cl" style="left:311.20px;top:92px;width:33.80px"><span class="t" style="left:1.46px;top:-0.00px;transform:scaleX(0.8300);">2.5</span></span>
<span class="cl" style="left:345.20px;top:92px;width:43.80px"><span class="t" style="left:1.19px;top:-0.00px;transform:scaleX(0.8300);">1461</span></span>
<span class="cl" style="left:388.80px;top:92px;width:45.20px"><span class="t" style="left:1.46px;top:-0.00px;transform:scaleX(0.8300);">243.7</span></span>
<span class="cl" style="left:434.20px;top:92px;width:34.30px"><span class="t" style="left:1.46px;top:-0.00px;transform:scaleX(0.8300);">28.5</span></span>
<span class="cl" style="left:0.90px;top:110px;width:105.10px"><span class="t" style="left:1.46px;top:-0.00px;transform:scaleX(0.8232);">2015-08-23 16:54:35</span></span>
<span class="cl" style="left:105.70px;top:110px;width:125.30px"><span class="t" style="left:1.05px;top:-0.00px;transform:scaleX(0.8108);">ISS</span></span>
<span class="cl" style="left:230.40px;top:110px;width:45.60px"><span class="t" style="left:1.19px;top:-0.00px;transform:scaleX(0.8300);">186.6</span></span>
<span class="cl" style="left:275.80px;top:110px;width:35.20px"><span class="t" style="left:1.46px;top:-0.00px;transform:scaleX(0.8300);">25.5</span></span>
<span class="cl" style="left:311.20px;top:110px;width:33.80px"><span class="t" style="left:1.62px;top:-0.00px;transform:scaleX(0.8300);">0.9</span></span>
<span class="cl" style="left:345.20px;top:110px;width:43.80px"><span class="t" style="left:1.57px;top:-0.00px;transform:scaleX(0.8300);">845</span></span>
<span class="cl" style="left:388.80px;top:110px;width:45.20px"><span class="t" style="left:1.46px;top:-0.00px;transform:scaleX(0.8300);">244.4</span></span>
<span class="cl" style="left:434.20px;top:110px;width:34.30px"><span class="t" style="left:1.46px;top:-0.00px;transform:scaleX(0.8300);">28.2</span></span>
<span class="cl" style="left:0.90px;top:128px;width:105.10px"><span class="t" style="left:1.46px;top:-0.00px;transform:scaleX(0.8236);">2015-08-23 16:57:21</span></span>
<span class="cl" style="left:105.70px;top:128px;width:125.30px"><span class="t" style="left:1.05px;top:-0.00px;transform:scaleX(0.8108);">ISS</span></span>
<span class="cl" style="left:230.40px;top:128px;width:45.60px"><span class="t" style="left:1.19px;top:-0.00px;transform:scaleX(0.8300);">128.8</span></span>
<span class="cl" style="left:275.80px;top:128px;width:35.20px"><span class="t" style="left:1.19px;top:-0.00px;transform:scaleX(0.8300);">10.0</span></span>
<span class="cl" style="left:311.20px;top:128px;width:33.80px"><span class="t" style="left:1.19px;top:-0.00px;transform:scaleX(0.8300);">1.8</span></span>
<span class="cl" style="left:345.20px;top:128px;width:43.80px"><span class="t" style="left:1.19px;top:-0.00px;transform:scaleX(0.8300);">1460</span></span>
<span class="cl" style="left:388.80px;top:128px;width:45.20px"><span class="t" style="left:1.46px;top:-0.00px;transform:scaleX(0.8300);">245.1</span></span>
<span class="cl" style="left:434.20px;top:128px;width:34.30px"><span class="t" style="left:1.46px;top:-0.00px;transform:scaleX(0.8300);">27.9</span></span>
</div>
<div class="sb" style="left:469px;top:0;width:16px;height:133px"></div>
<div class="thumb" style="left:469px;top:17px;width:15px;height:17px"></div>
<svg class="abs" style="left:469px;top:0" width="15" height="133" viewBox="0 0 15 133"><path d="M4.500,11 L7.500,7.500 L10.500,11" stroke="#606060" stroke-width="2.200" fill="none"/><path d="M4.500,123 L7.500,126.500 L10.500,123" stroke="#606060" stroke-width="2.200" fill="none"/></svg>
</div></div>
<div class="abs" style="left:808px;top:580px;width:78px;height:22px;background:#f9f9f9;border:1px solid;border-color:#a0a0a0 #fff #fff #a0a0a0"></div>
<span class="t" style="left:813.50px;top:586.00px;transform:scaleX(0.8627);color:#000;">Прохождения</span>
<span class="t" style="left:823.68px;top:609.00px;transform:scaleX(0.8815);color:#000;">Вспышки</span>
<div class="btn" style="left:808px;top:666px;width:78px;height:25px"></div>
<span class="t" style="left:828.31px;top:671.00px;transform:scaleX(0.8588);color:#000;"><u>Р</u>асчет</span>
<svg class="abs" style="left:812px;top:694px" width="76" height="22" viewBox="812 694 76 22" shape-rendering="crispEdges"><path d="M815.500,703.500 H819.500 V700.500 L824.500,705.500 L819.500,710.500 V707.500 H815.500Z" fill="#009090" stroke="#000" stroke-width="1"/><rect x="840.500" y="698.500" width="13" height="13" fill="#808000" stroke="#000" stroke-width="1"/><rect x="843" y="699" width="8" height="6" fill="#c0c0c0"/><rect x="843" y="707" width="9" height="5" fill="#000"/><rect x="849" y="708" width="2" height="3" fill="#c0c0c0"/><rect x="852" y="699" width="1" height="1" fill="#fff"/><path d="M870.500,698.500 H880.500 L878.500,703.500 H868.500Z" fill="#fff" stroke="#000" stroke-width="1"/><path d="M872,700.500 H878 M871,702.500 H876" stroke="#000" stroke-width="1" fill="none"/><path d="M866.500,705.500 L868.500,703.500 H880.500 L881.500,702.500 V709.500 L879.500,711.500 H866.500Z" fill="#fff" stroke="#000" stroke-width="1"/><path d="M866.500,705.500 H879.500 V711.500 M879.500,705.500 L881.500,703.500" stroke="#000" stroke-width="1" fill="none"/><rect x="867" y="707" width="12" height="2" fill="#c0c0c0"/><rect x="873" y="708" width="3" height="1" fill="#ffff00"/><rect x="867" y="710" width="12" height="1" fill="#000"/></svg>
<svg class="abs" style="left:0;top:0" width="1366" height="768" viewBox="0 0 1366 768" pointer-events="none">
<path d="M771.8,732.5 L851.8,732.5 L847.0,748 L776.6,748 Z" fill="#ffffff"/><path d="M851.5,732.5 L846.7,747.5 L777.1,747.5" fill="none" stroke="#7a7a7a" stroke-width="1"/>
<path d="M696.4,732.5 L775.8,732.5 L771.0,748 L701.2,748 Z" fill="#ffffff"/><path d="M775.5,732.5 L770.7,747.5 L701.7,747.5" fill="none" stroke="#7a7a7a" stroke-width="1"/>
<path d="M546.2,732.5 L656.5,732.5 L651.7,748 L551.0,748 Z" fill="#ffffff"/><path d="M656.2,732.5 L651.4,747.5 L551.5,747.5" fill="none" stroke="#7a7a7a" stroke-width="1"/>
<path d="M471.8,732.5 L550.1,732.5 L545.3,748 L476.6,748 Z" fill="#ffffff"/><path d="M549.8,732.5 L545.0,747.5 L477.1,747.5" fill="none" stroke="#7a7a7a" stroke-width="1"/>
<path d="M430.2,732.5 L475.3,732.5 L470.5,748 L435.0,748 Z" fill="#ffffff"/><path d="M475.0,732.5 L470.2,747.5 L435.5,747.5" fill="none" stroke="#7a7a7a" stroke-width="1"/>
<path d="M352.5,732.5 L433.8,732.5 L429.0,748 L357.3,748 Z" fill="#ffffff"/><path d="M433.5,732.5 L428.7,747.5 L357.8,747.5" fill="none" stroke="#7a7a7a" stroke-width="1"/>
<path d="M301.7,732.5 L356.4,732.5 L351.6,748 L306.5,748 Z" fill="#ffffff"/><path d="M356.1,732.5 L351.3,747.5 L307.0,747.5" fill="none" stroke="#7a7a7a" stroke-width="1"/>
<path d="M652.6,732.5 L699.8,732.5 L695.0,748 L657.4,748 Z" fill="#f0f0f0"/><path d="M699.5,732.5 L694.7,747.5 L657.9,747.5" fill="none" stroke="#7a7a7a" stroke-width="1"/>
<path d="M878.5,731.5 L897.7,731.5 L893.7,748 L882.5,748 Z" fill="#f0f0f0"/><path d="M897.4,731.5 L893.4,747.5 L883.0,747.5" fill="none" stroke="#7a7a7a" stroke-width="1"/>
<path d="M1264.4,437 L1317.2,437 L1313.0,452 L1268.6,452 Z" fill="#ffffff"/><path d="M1316.9,437 L1312.7,451.5 L1269.1,451.5" fill="none" stroke="#7a7a7a" stroke-width="1"/>
<path d="M1208.0,437 L1267.2,437 L1263.0,452 L1212.2,452 Z" fill="#f0f0f0"/><path d="M1266.9,437 L1262.7,451.5 L1212.7,451.5" fill="none" stroke="#7a7a7a" stroke-width="1"/>
</svg>
<span class="t" style="left:306.80px;top:733.00px;transform:scaleX(0.8690);color:#000;">Главное</span>
<span class="t" style="left:358.01px;top:733.00px;transform:scaleX(0.8441);color:#000;">Отображение</span>
<span class="t" style="left:436.21px;top:733.00px;transform:scaleX(0.8605);color:#000;">Место</span>
<span class="t" style="left:477.03px;top:733.00px;transform:scaleX(0.8394);color:#000;">Информация</span>
<span class="t" style="left:551.91px;top:733.00px;transform:scaleX(0.8558);color:#000;">Настройки расчета</span>
<span class="t" style="left:658.82px;top:733.00px;transform:scaleX(0.8464);color:#000;">Расчет</span>
<span class="t" style="left:702.99px;top:733.00px;transform:scaleX(0.8734);color:#000;">Ротор/Радио</span>
<span class="t" style="left:777.89px;top:733.00px;transform:scaleX(0.8687);color:#000;">О программе</span>
<span class="t" style="left:884.58px;top:733.00px;transform:scaleX(0.8013);color:#000;">?</span>
<span class="t" style="left:1213.35px;top:437.00px;transform:scaleX(0.8515);color:#000;">Спутники</span>
<span class="t" style="left:1269.94px;top:437.00px;transform:scaleX(0.8696);color:#000;">Данные</span>
<div id="status"></div>
<span class="t" style="left:570.53px;top:754.00px;transform:scaleX(0.8048);color:#c8c8c8;">Orbitron 3.10 - (C) 2001-2004 by Sebastian Stoff</span>
</body></html>
